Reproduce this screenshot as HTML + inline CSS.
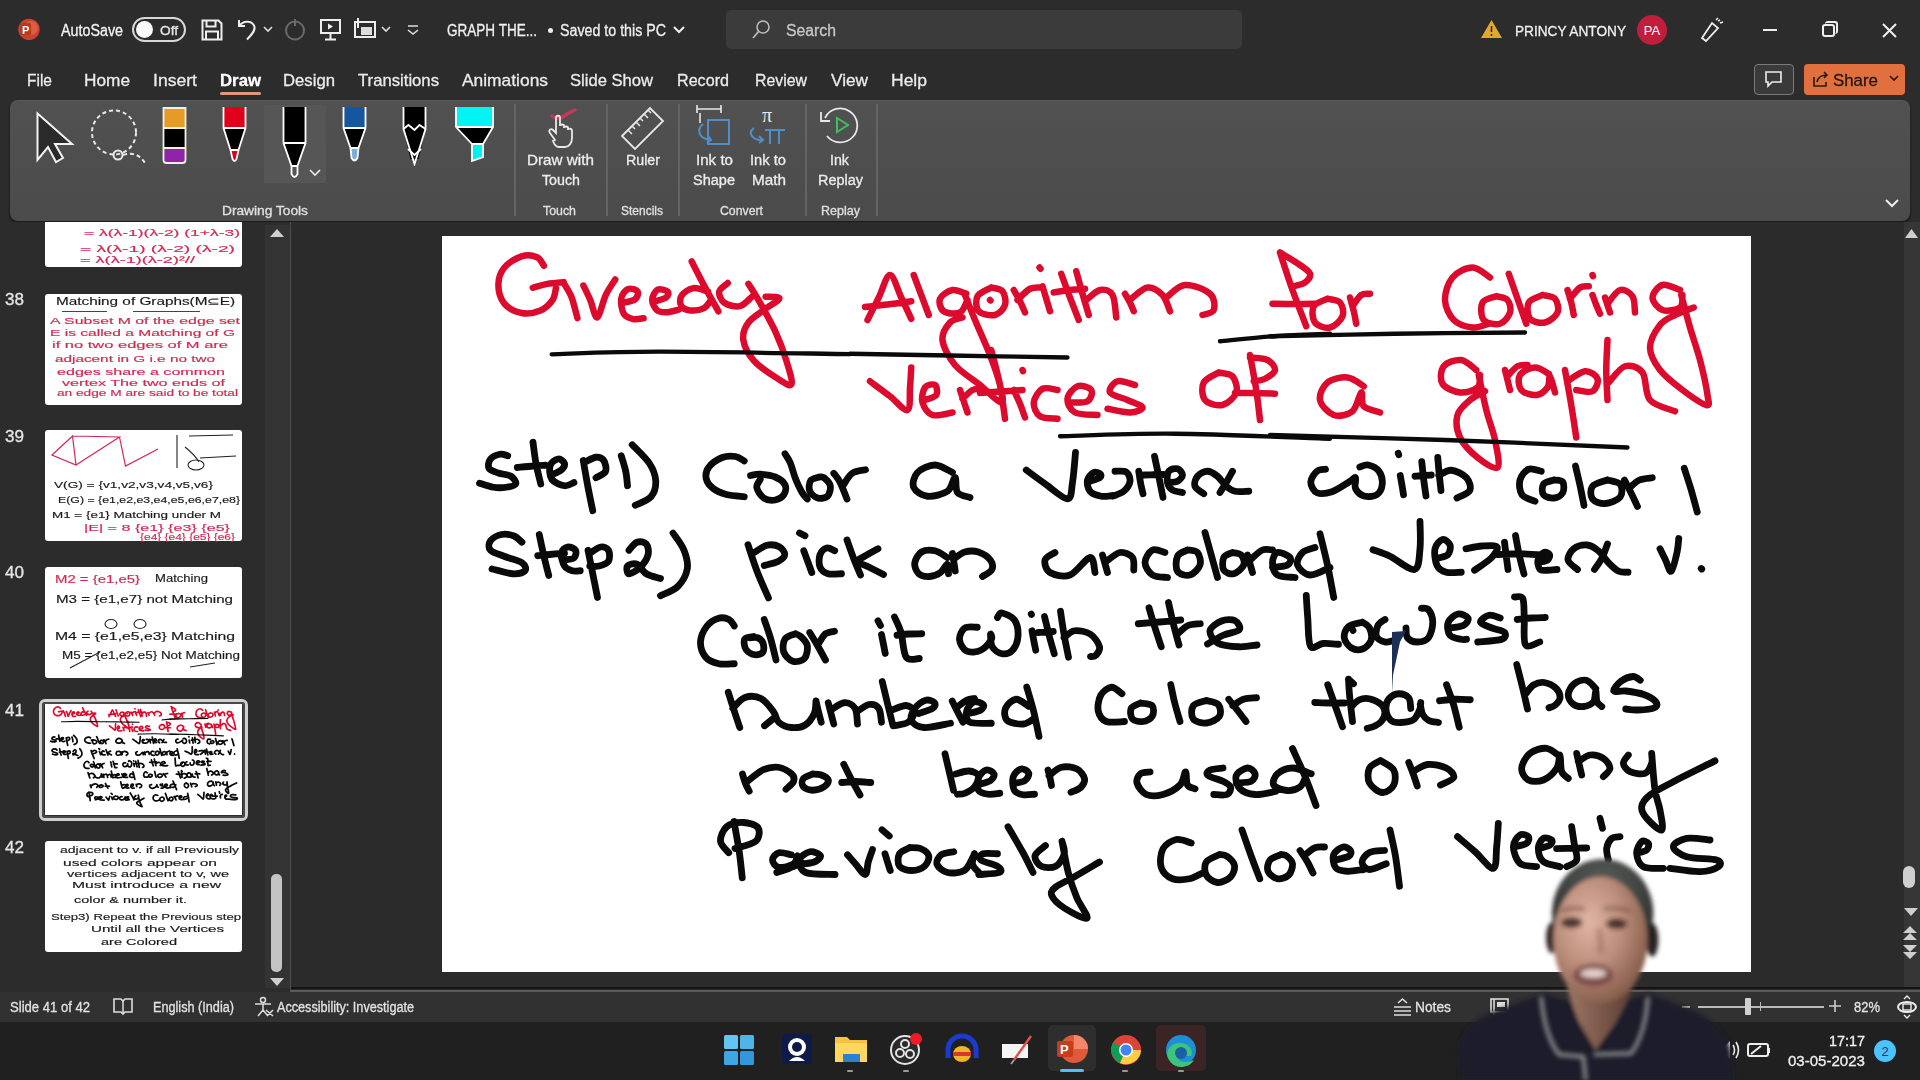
<!DOCTYPE html>
<html><head><meta charset="utf-8"><style>
*{margin:0;padding:0;box-sizing:border-box}
html,body{width:1920px;height:1080px;overflow:hidden;background:#2c2c2c;font-family:"Liberation Sans",sans-serif;color:#f0f0f0}
.a{position:absolute;display:block}
.t{position:absolute;white-space:nowrap;line-height:1;transform-origin:0 0;-webkit-text-stroke:0.3px currentColor}
</style></head><body>

<div class="a" style="left:0px;top:0px;width:1920px;height:100px;background:#2c2c2c;"></div>
<div class="a" style="left:10px;top:100px;width:1900px;height:121px;background:linear-gradient(#515151,#4b4b4b);border-radius:8px;box-shadow:0 1px 0 #1a1a1a,0 2px 3px rgba(0,0,0,.5);border-top:1px solid #5a5a5a"></div>
<div class="a" style="left:0px;top:222px;width:290px;height:768px;background:#2c2c2c;"></div>
<div class="a" style="left:290px;top:222px;width:1px;height:770px;background:#4e4e4e;"></div>
<div class="a" style="left:291px;top:222px;width:1613px;height:768px;background:#2b2b2b;"></div>
<div class="a" style="left:1904px;top:222px;width:16px;height:768px;background:#363636;"></div>
<div class="a" style="left:291px;top:987px;width:1629px;height:2px;background:#141414;"></div>
<div class="a" style="left:290px;top:990px;width:1630px;height:1.5px;background:#5a5a5a;"></div>
<div class="a" style="left:0px;top:992px;width:1920px;height:30px;background:#313131;"></div>
<div class="a" style="left:0px;top:1022px;width:1920px;height:58px;background:#202020;"></div>
<svg class="a" style="left:17px;top:17px;" width="26" height="26" viewBox="0 0 26 26"><circle cx="12" cy="12.4" r="10.7" fill="#c9432a"></circle><circle cx="14" cy="11" r="7" fill="#e0694f" opacity=".7"></circle><rect x="3" y="6" width="11" height="12" rx="1.5" fill="#b7381e"></rect><text x="5" y="16.5" font-family="Liberation Sans" font-weight="bold" font-size="11" fill="#fff">P</text></svg>
<span class="t" style="left: 61px; top: 22.5px; font-size: 16px; --w: 62px; color: rgb(242, 242, 242); transform: scaleX(0.8935);">AutoSave</span>
<div class="a" style="left:132px;top:17px;width:54px;height:25px;border:2px solid #d8d8d8;border-radius:13px;background:#2c2c2c"></div>
<div class="a" style="left:136px;top:21px;width:17px;height:17px;border-radius:50%;background:#fafafa"></div>
<span class="t" style="left: 160px; top: 24px; font-size: 13px; --w: 18px; color: rgb(230, 230, 230); transform: scaleX(1.0521);">Off</span>
<svg class="a" style="left:200px;top:18px;" width="24" height="24" viewBox="0 0 24 24"><path d="M2.5 2.5h16l3 3v16h-19z" fill="none" stroke="#eee" stroke-width="2"></path><path d="M6.5 2.5v6h9v-6M6 21.5v-8h12v8" fill="none" stroke="#eee" stroke-width="2"></path></svg>
<svg class="a" style="left:235px;top:16px;" width="24" height="26" viewBox="0 0 24 26"><path d="M4 4v6h6" fill="none" stroke="#eee" stroke-width="2"></path><path d="M4.5 9.5C8 5 16 4 19 9.5c2 4-1 8-7 14" fill="none" stroke="#eee" stroke-width="2"></path></svg>
<svg class="a" style="left:263px;top:25px;" width="10" height="8" viewBox="0 0 10 8"><path d="M1 2l4 4 4-4" fill="none" stroke="#ddd" stroke-width="1.6"></path></svg>
<svg class="a" style="left:283px;top:18px;" width="24" height="24" viewBox="0 0 24 24"><circle cx="12" cy="12.5" r="9" fill="none" stroke="#6a6a6a" stroke-width="2"></circle><path d="M12 1v7" stroke="#6a6a6a" stroke-width="2"></path></svg>
<svg class="a" style="left:319px;top:18px;" width="24" height="24" viewBox="0 0 24 24"><rect x="2" y="2" width="19" height="13" fill="none" stroke="#eee" stroke-width="2"></rect><path d="M9 5.5v6l5-3z" fill="#eee"></path><path d="M11.5 15v6M6 21.5h11" stroke="#eee" stroke-width="2"></path></svg>
<svg class="a" style="left:352px;top:18px;" width="26" height="24" viewBox="0 0 26 24"><rect x="3" y="4" width="20" height="15" fill="none" stroke="#eee" stroke-width="2"></rect><rect x="9" y="9" width="11" height="8" fill="#ddd"></rect><path d="M6 0v10" stroke="#eee" stroke-width="2"></path></svg>
<svg class="a" style="left:381px;top:25px;" width="10" height="8" viewBox="0 0 10 8"><path d="M1 2l4 4 4-4" fill="none" stroke="#ddd" stroke-width="1.6"></path></svg>
<svg class="a" style="left:406px;top:24px;" width="14" height="12" viewBox="0 0 14 12"><path d="M2 2h10M2 6l5 4 5-4" fill="none" stroke="#ddd" stroke-width="1.6"></path></svg>
<span class="t" style="left: 447px; top: 22.5px; font-size: 16px; --w: 90px; color: rgb(240, 240, 240); transform: scaleX(0.8459);">GRAPH THE...</span>
<div class="a" style="left:548px;top:28px;width:5px;height:5px;border-radius:50%;background:#eee"></div>
<span class="t" style="left: 560px; top: 22.5px; font-size: 16px; --w: 106px; color: rgb(240, 240, 240); transform: scaleX(0.8895);">Saved to this PC</span>
<svg class="a" style="left:672px;top:24px;" width="14" height="12" viewBox="0 0 14 12"><path d="M2 3l5 5 5-5" fill="none" stroke="#eee" stroke-width="2"></path></svg>
<div class="a" style="left:726px;top:10px;width:516px;height:39px;background:#3b3b3b;border-radius:5px"></div>
<svg class="a" style="left:750px;top:18px;" width="22" height="24" viewBox="0 0 22 24"><circle cx="13" cy="9" r="6" fill="none" stroke="#bbb" stroke-width="1.6"></circle><path d="M9 13l-6 7" stroke="#bbb" stroke-width="1.8"></path></svg>
<span class="t" style="left: 786px; top: 22.5px; font-size: 16px; --w: 50px; color: rgb(200, 200, 200); transform: scaleX(0.9861);">Search</span>
<svg class="a" style="left:1480px;top:18px;" width="24" height="22" viewBox="0 0 24 22"><path d="M11.5 2L22 20H1z" fill="#e2a72f"></path><path d="M11.5 8v6" stroke="#2c2c2c" stroke-width="1.6"></path><circle cx="11.5" cy="17" r="1" fill="#2c2c2c"></circle></svg>
<span class="t" style="left: 1515px; top: 23.3px; font-size: 15px; --w: 111px; color: rgb(240, 240, 240); transform: scaleX(0.91);">PRINCY ANTONY</span>
<svg class="a" style="left:1636px;top:14px;" width="32" height="32" viewBox="0 0 32 32"><circle cx="16" cy="16" r="15" fill="#c01e3c"></circle><text x="16" y="21" text-anchor="middle" font-family="Liberation Sans" font-size="13" fill="#fff">PA</text></svg>
<svg class="a" style="left:1699px;top:17px;" width="26" height="26" viewBox="0 0 26 26"><path d="M3 21l4 3 12-13-6-5z" fill="none" stroke="#eee" stroke-width="1.8"></path><path d="M17 3l2-2M21 6l3-1M19 4l2-1" stroke="#eee" stroke-width="1.5"></path></svg>
<div class="a" style="left:1763px;top:29px;width:14px;height:2px;background:#eeeeee;"></div>
<div class="a" style="left:1822px;top:24px;width:13px;height:13px;border:2px solid #eee;border-radius:3px"></div>
<div class="a" style="left:1825px;top:21px;width:13px;height:13px;border-top:2px solid #eee;border-right:2px solid #eee;border-radius:3px"></div>
<svg class="a" style="left:1881px;top:22px;" width="17" height="17" viewBox="0 0 17 17"><path d="M2 2l13 13M15 2L2 15" stroke="#eee" stroke-width="2"></path></svg>
<span class="t" style="left: 27px; top: 71.6px; font-size: 17px; --w: 25px; color: rgb(235, 235, 235); transform: scaleX(0.9122);">File</span>
<span class="t" style="left: 84px; top: 71.6px; font-size: 17px; --w: 46px; color: rgb(235, 235, 235); transform: scaleX(1.0141);">Home</span>
<span class="t" style="left: 153px; top: 71.6px; font-size: 17px; --w: 44px; color: rgb(235, 235, 235); transform: scaleX(1.0345);">Insert</span>
<span class="t" style="left: 283px; top: 71.6px; font-size: 17px; --w: 52px; color: rgb(235, 235, 235); transform: scaleX(0.9826);">Design</span>
<span class="t" style="left: 358px; top: 71.6px; font-size: 17px; --w: 81px; color: rgb(235, 235, 235); transform: scaleX(0.9816);">Transitions</span>
<span class="t" style="left: 462px; top: 71.6px; font-size: 17px; --w: 86px; color: rgb(235, 235, 235); transform: scaleX(1.0225);">Animations</span>
<span class="t" style="left: 570px; top: 71.6px; font-size: 17px; --w: 83px; color: rgb(235, 235, 235); transform: scaleX(0.9758);">Slide Show</span>
<span class="t" style="left: 677px; top: 71.6px; font-size: 17px; --w: 52px; color: rgb(235, 235, 235); transform: scaleX(0.9487);">Record</span>
<span class="t" style="left: 755px; top: 71.6px; font-size: 17px; --w: 52px; color: rgb(235, 235, 235); transform: scaleX(0.9327);">Review</span>
<span class="t" style="left: 831px; top: 71.6px; font-size: 17px; --w: 37px; color: rgb(235, 235, 235); transform: scaleX(1.0124);">View</span>
<span class="t" style="left: 891px; top: 71.6px; font-size: 17px; --w: 36px; color: rgb(235, 235, 235); transform: scaleX(1.0295);">Help</span>
<span class="t" style="left: 220px; top: 71.6px; font-size: 17px; --w: 41px; color: rgb(255, 255, 255); font-weight: bold; transform: scaleX(0.9861);">Draw</span>
<div class="a" style="left:220px;top:92px;width:41px;height:3px;background:#e3967b;border-radius:2px"></div>
<div class="a" style="left:1754px;top:64px;width:40px;height:31px;border:1.5px solid #7a7a7a;border-radius:4px;background:#3a3a3a"></div>
<svg class="a" style="left:1764px;top:70px;" width="20" height="18" viewBox="0 0 20 18"><path d="M2 2h15v10H8l-4 4v-4H2z" fill="none" stroke="#eee" stroke-width="1.6"></path></svg>
<div class="a" style="left:1804px;top:64px;width:101px;height:31px;background:#e2703f;border-radius:4px"></div>
<svg class="a" style="left:1811px;top:70px;" width="20" height="18" viewBox="0 0 20 18"><path d="M3 7v9h12v-4" fill="none" stroke="#2a1a10" stroke-width="1.6"></path><path d="M6 12c1-5 5-7 10-7M13 2l3 3-3 3" fill="none" stroke="#2a1a10" stroke-width="1.6"></path></svg>
<span class="t" style="left: 1833px; top: 71.6px; font-size: 17px; --w: 45px; color: rgb(34, 22, 14); transform: scaleX(0.9917);">Share</span>
<svg class="a" style="left:1888px;top:73px;" width="12" height="10" viewBox="0 0 12 10"><path d="M2 3l4 4 4-4" fill="none" stroke="#22160e" stroke-width="1.6"></path></svg>
<svg class="a" style="left:30px;top:108px;" width="50" height="60" viewBox="0 0 50 60"><path d="M7.5 5.5V52l10.5-13 8 15 7-4-8-14h17z" fill="#2a2a2a" stroke="#f2f2f2" stroke-width="2"></path></svg>
<svg class="a" style="left:86px;top:104px;" width="66" height="64" viewBox="0 0 66 64"><circle cx="28" cy="28.5" r="22" fill="none" stroke="#e8e8e8" stroke-width="2" stroke-dasharray="4 3"></circle><circle cx="32" cy="51" r="4.5" fill="none" stroke="#e8e8e8" stroke-width="2"></circle><path d="M37 51c10-3 17 0 22 8" fill="none" stroke="#e8e8e8" stroke-width="2" stroke-dasharray="4 3"></path></svg>
<svg class="a" style="left:160px;top:105px;" width="30" height="62" viewBox="0 0 30 62"><rect x="3.5" y="3" width="22" height="20" fill="#e69b24"></rect><rect x="3.5" y="23" width="22" height="20" fill="#000"></rect><path d="M3.5 43h22v12q0 3-3 3h-16q-3 0-3-3z" fill="#8e24aa"></path><path d="M3.5 3h22v52q0 3-3 3h-16q-3 0-3-3z" fill="none" stroke="#f4f0e0" stroke-width="1.8"></path><path d="M3.5 23h22M3.5 43h22" stroke="#f4f0e0" stroke-width="1.8"></path></svg>
<svg class="a" style="left:220px;top:104px;" width="30" height="62" viewBox="0 0 30 62"><rect x="3.5" y="3" width="22" height="21" fill="#e0001b"></rect><path d="M3.5 24h22l-7 22h-8z" fill="#000"></path><path d="M10.5 46h8l-2 9q-2 4-4 0z" fill="#e0001b"></path><path d="M3.5 3v21l7 22 2 9q2 4 4 0l2-9 7-22V3" fill="none" stroke="#fff" stroke-width="1.8"></path><path d="M3.5 24h22M10.5 46h8" stroke="#fff" stroke-width="1.8"></path></svg>
<div class="a" style="left:264px;top:105px;width:62px;height:78px;background:#565656;border-radius:2px"></div>
<svg class="a" style="left:280px;top:104px;" width="30" height="78" viewBox="0 0 30 78"><rect x="3.5" y="3" width="22" height="36" fill="#000"></rect><path d="M3.5 39h22l-8 23h-6z" fill="#000"></path><path d="M3.5 3v36l8 23v8q3 6 6 0v-8l8-23V3" fill="none" stroke="#fff" stroke-width="1.8"></path><path d="M3.5 39h22M11.5 62h6" stroke="#fff" stroke-width="1.8"></path></svg>
<svg class="a" style="left:308px;top:168px;" width="14" height="10" viewBox="0 0 14 10"><path d="M2 2l5 5 5-5" fill="none" stroke="#eee" stroke-width="1.6"></path></svg>
<svg class="a" style="left:340px;top:104px;" width="30" height="62" viewBox="0 0 30 62"><rect x="3.5" y="3" width="22" height="21" fill="#1457a0"></rect><path d="M3.5 24h22l-7 20h-8z" fill="#000"></path><path d="M10.5 44h8l-1 10q-3 5-6 0z" fill="#7aaee0"></path><path d="M3.5 3v21l7 20 1 10q3 5 6 0l1-10 7-20V3" fill="none" stroke="#fff" stroke-width="1.8"></path><path d="M3.5 24h22M10.5 44h8" stroke="#fff" stroke-width="1.8"></path></svg>
<svg class="a" style="left:400px;top:104px;" width="30" height="62" viewBox="0 0 30 62"><path d="M3.5 3h22v22l-7 30h-8l-7-30z" fill="#000"></path><path d="M3.5 3v22l11 35 11-35V3" fill="none" stroke="#fff" stroke-width="1.8"></path><path d="M3.5 25l5-4 6 5 5-5 6 4M8 45l6.5 6 6.5-6" fill="none" stroke="#fff" stroke-width="1.8"></path></svg>
<svg class="a" style="left:452px;top:104px;" width="44" height="62" viewBox="0 0 44 62"><rect x="4" y="3" width="37" height="20" fill="#00f4f4"></rect><path d="M4 23h37l-10 17v13l-11 4V40z" fill="#000"></path><path d="M20 40h11v13l-11 4z" fill="#00f0f0"></path><path d="M4 3v20l16 17v17l11-4V40l10-17V3" fill="none" stroke="#fff" stroke-width="1.8"></path><path d="M4 23h37M20 40h11" stroke="#fff" stroke-width="1.8"></path></svg>
<span class="t" style="left: 222px; top: 204px; font-size: 13px; --w: 86px; color: rgb(224, 224, 224); transform: scaleX(1.0562);">Drawing Tools</span>
<div class="a" style="left:514px;top:104px;width:1.5px;height:112px;background:#646464;"></div>
<div class="a" style="left:606px;top:104px;width:1.5px;height:112px;background:#646464;"></div>
<div class="a" style="left:678px;top:104px;width:1.5px;height:112px;background:#646464;"></div>
<div class="a" style="left:805px;top:104px;width:1.5px;height:112px;background:#646464;"></div>
<div class="a" style="left:876px;top:104px;width:1.5px;height:112px;background:#646464;"></div>
<svg class="a" style="left:541px;top:104px;" width="40" height="46" viewBox="0 0 40 46"><path d="M11 12c4 3 8 3 12 0s7-4 11-6" fill="none" stroke="#c23a55" stroke-width="3.5" stroke-linecap="round"></path><path d="M14 36l-5-7c-2-3 1-5 3-3l3 3V14c0-3 4-3 4 0v8c0-2 4-2 4 0v2c0-2 4-2 4 0v2c0-2 4-2 4 1v7c0 5-3 9-7 9h-6c-3 0-5-3-6-6z" fill="none" stroke="#e8e8e8" stroke-width="1.8"></path></svg>
<span class="t" style="left: 527px; top: 153.1px; font-size: 14px; --w: 67px; color: rgb(236, 236, 236); transform: scaleX(1.09);">Draw with</span>
<span class="t" style="left: 542px; top: 173.1px; font-size: 14px; --w: 38px; color: rgb(236, 236, 236); transform: scaleX(1.0171);">Touch</span>
<span class="t" style="left: 543px; top: 204px; font-size: 13px; --w: 33px; color: rgb(224, 224, 224); transform: scaleX(0.9509);">Touch</span>
<svg class="a" style="left:620px;top:104px;" width="46" height="46" viewBox="0 0 46 46"><path d="M2 32L30 4l13 13-28 28z" fill="none" stroke="#e8e8e8" stroke-width="1.8"></path><path d="M8 26l4 4M12 22l3 3M16 18l4 4M20 14l3 3M24 10l4 4M28 6l3 3" stroke="#e8e8e8" stroke-width="1.5"></path></svg>
<span class="t" style="left: 626px; top: 153.1px; font-size: 14px; --w: 34px; color: rgb(236, 236, 236); transform: scaleX(1.0159);">Ruler</span>
<span class="t" style="left: 621px; top: 204px; font-size: 13px; --w: 42px; color: rgb(224, 224, 224); transform: scaleX(0.9224);">Stencils</span>
<svg class="a" style="left:694px;top:104px;" width="40" height="46" viewBox="0 0 40 46"><path d="M3 5h24M3 1v8M27 1v8" stroke="#e8e8e8" stroke-width="1.6" fill="none"></path><path d="M6 9v10" stroke="#e8e8e8" stroke-width="1.6"></path><rect x="14" y="16" width="21" height="24" fill="none" stroke="#4f8fc7" stroke-width="2"></rect><path d="M9 20c-7 6-4 15 8 16M14 32l3 4-4 3" fill="none" stroke="#4f8fc7" stroke-width="2"></path></svg>
<span class="t" style="left: 696px; top: 153.1px; font-size: 14px; --w: 37px; color: rgb(236, 236, 236); transform: scaleX(1.0803);">Ink to</span>
<span class="t" style="left: 693px; top: 173.1px; font-size: 14px; --w: 42px; color: rgb(236, 236, 236); transform: scaleX(1.0374);">Shape</span>
<svg class="a" style="left:748px;top:104px;" width="40" height="46" viewBox="0 0 40 46"><text x="14" y="18" font-family="Liberation Serif" font-size="20" fill="#e8e8e8">π</text><path d="M6 24c-6 4-3 12 8 12M11 32l4 4-4 3" fill="none" stroke="#4f8fc7" stroke-width="2"></path><path d="M17 26h20M22 26v14M31 26v14" stroke="#4f8fc7" stroke-width="2"></path></svg>
<span class="t" style="left: 750px; top: 153.1px; font-size: 14px; --w: 36px; color: rgb(236, 236, 236); transform: scaleX(1.0511);">Ink to</span>
<span class="t" style="left: 752px; top: 173.1px; font-size: 14px; --w: 34px; color: rgb(236, 236, 236); transform: scaleX(1.0924);">Math</span>
<span class="t" style="left: 720px; top: 204px; font-size: 13px; --w: 43px; color: rgb(224, 224, 224); transform: scaleX(0.9444);">Convert</span>
<svg class="a" style="left:818px;top:104px;" width="46" height="46" viewBox="0 0 46 46"><path d="M7 14A17 17 0 1 1 9 32" fill="none" stroke="#e8e8e8" stroke-width="1.8"></path><path d="M3 8v9h9" fill="none" stroke="#e8e8e8" stroke-width="1.8"></path><path d="M19 14v14l11-7z" fill="none" stroke="#3fbf5f" stroke-width="2"></path></svg>
<span class="t" style="left: 830px; top: 153.1px; font-size: 14px; --w: 19px; color: rgb(236, 236, 236); transform: scaleX(1.0167);">Ink</span>
<span class="t" style="left: 818px; top: 173.1px; font-size: 14px; --w: 45px; color: rgb(236, 236, 236); transform: scaleX(1.0323);">Replay</span>
<span class="t" style="left: 821px; top: 204px; font-size: 13px; --w: 39px; color: rgb(224, 224, 224); transform: scaleX(0.9637);">Replay</span>
<svg class="a" style="left:1884px;top:197px;" width="16" height="12" viewBox="0 0 16 12"><path d="M2 3l6 6 6-6" fill="none" stroke="#eee" stroke-width="2"></path></svg>
<div class="a" style="left:265px;top:225px;width:25px;height:763px;background:#333333;"></div>
<svg class="a" style="left:268px;top:227px;" width="18" height="12" viewBox="0 0 18 12"><path d="M2 10l7-8 7 8z" fill="#cfcfcf"></path></svg>
<div class="a" style="left:271px;top:874px;width:11px;height:98px;background:#c4c4c4;border-radius:5px"></div>
<svg class="a" style="left:268px;top:976px;" width="18" height="12" viewBox="0 0 18 12"><path d="M2 2l7 8 7-8z" fill="#cfcfcf"></path></svg>
<svg class="a" style="left:1903px;top:226px;" width="17" height="14" viewBox="0 0 17 14"><path d="M2 12l6.5-9 6.5 9z" fill="#cfcfcf"></path></svg>
<div class="a" style="left:1903px;top:866px;width:12px;height:22px;background:#cfcfcf;border-radius:6px"></div>
<svg class="a" style="left:1902px;top:906px;" width="17" height="12" viewBox="0 0 17 12"><path d="M2 2l7 8 7-8z" fill="#cfcfcf"></path></svg>
<svg class="a" style="left:1901px;top:925px;" width="18" height="36" viewBox="0 0 18 36"><path d="M2 8l7-7 7 7zM2 15l7-7 7 7z" fill="#cfcfcf"></path><path d="M2 20l7 7 7-7zM2 27l7 7 7-7z" fill="#cfcfcf"></path></svg>
<span class="t" style="left: 10px; top: 1000.1px; font-size: 14px; --w: 80px; color: rgb(226, 226, 226); transform: scaleX(0.9343);">Slide 41 of 42</span>
<svg class="a" style="left:112px;top:997px;" width="22" height="20" viewBox="0 0 22 20"><path d="M2 2h7l2 2 2-2h7v13h-7l-2 2-2-2H2z" fill="none" stroke="#ddd" stroke-width="1.6"></path><path d="M11 4v13" stroke="#ddd" stroke-width="1.5"></path></svg>
<span class="t" style="left: 153px; top: 1000.1px; font-size: 14px; --w: 81px; color: rgb(226, 226, 226); transform: scaleX(0.905);">English (India)</span>
<svg class="a" style="left:253px;top:996px;" width="22" height="22" viewBox="0 0 22 22"><circle cx="10" cy="4" r="2.5" fill="none" stroke="#ddd" stroke-width="1.5"></circle><path d="M2 8h16M10 8v6l-5 6M10 14l5 6M13 14l7 6M20 14l-6 6" fill="none" stroke="#ddd" stroke-width="1.5"></path></svg>
<span class="t" style="left: 277px; top: 1000.1px; font-size: 14px; --w: 137px; color: rgb(226, 226, 226); transform: scaleX(0.9029);">Accessibility: Investigate</span>
<svg class="a" style="left:1392px;top:996px;" width="22" height="22" viewBox="0 0 22 22"><path d="M2 11h17M2 15h17M2 19h17M6 7l4.5-4 4.5 4" fill="none" stroke="#ddd" stroke-width="1.6"></path></svg>
<span class="t" style="left: 1415px; top: 1000.1px; font-size: 14px; --w: 36px; color: rgb(226, 226, 226); transform: scaleX(0.9842);">Notes</span>
<svg class="a" style="left:1489px;top:997px;" width="22" height="20" viewBox="0 0 22 20"><rect x="2" y="2" width="17" height="13" fill="none" stroke="#ddd" stroke-width="1.6"></rect><rect x="8" y="5" width="8" height="5" fill="#ddd"></rect><path d="M5 2v16" stroke="#ddd" stroke-width="1.6"></path></svg>
<div class="a" style="left:1682px;top:1006px;width:8px;height:1.5px;background:#bbbbbb;"></div>
<div class="a" style="left:1698px;top:1006px;width:126px;height:1.5px;background:#bbbbbb;"></div>
<div class="a" style="left:1745px;top:998px;width:6px;height:17px;background:#d0d0d0;border-radius:1px"></div>
<div class="a" style="left:1760px;top:1002px;width:1px;height:9px;background:#bbbbbb;"></div>
<svg class="a" style="left:1827px;top:998px;" width="16" height="16" viewBox="0 0 16 16"><path d="M8 2v12M2 8h12" stroke="#ccc" stroke-width="1.6"></path></svg>
<span class="t" style="left: 1854px; top: 1000.1px; font-size: 14px; --w: 26px; color: rgb(226, 226, 226); transform: scaleX(0.9275);">82%</span>
<svg class="a" style="left:1895px;top:995px;" width="24" height="24" viewBox="0 0 24 24"><ellipse cx="12" cy="12" rx="9" ry="5" fill="none" stroke="#eee" stroke-width="2"></ellipse><rect x="8" y="9" width="8" height="6" fill="none" stroke="#eee" stroke-width="1.4"></rect><path d="M9 4l3-3 3 3M9 20l3 3 3-3" fill="none" stroke="#eee" stroke-width="1.4"></path></svg>
<svg class="a" style="left:723px;top:1034px;" width="32" height="32" viewBox="0 0 32 32"><rect x="1" y="1" width="14" height="14" rx="1.5" fill="#63c6f2"></rect><rect x="17" y="1" width="14" height="14" rx="1.5" fill="#4fb4ea"></rect><rect x="1" y="17" width="14" height="14" rx="1.5" fill="#3fa6e3"></rect><rect x="17" y="17" width="14" height="14" rx="1.5" fill="#3198dc"></rect></svg>
<svg class="a" style="left:781px;top:1033px;" width="32" height="32" viewBox="0 0 32 32"><rect x="1" y="1" width="30" height="30" rx="4" fill="#0e1a4a"></rect><circle cx="16" cy="14" r="9" fill="#fff"></circle><circle cx="16" cy="14" r="5" fill="#0e1a4a"></circle><path d="M8 28q8-8 16 0z" fill="#fff"></path></svg>
<svg class="a" style="left:834px;top:1034px;" width="34" height="30" viewBox="0 0 34 30"><path d="M1 3h12l3 3h17v22H1z" fill="#f5c341"></path><rect x="1" y="9" width="32" height="19" fill="#ffd75e"></rect><rect x="9" y="20" width="17" height="8" fill="#2f7fcf"></rect></svg>
<svg class="a" style="left:889px;top:1031px;" width="36" height="36" viewBox="0 0 36 36"><circle cx="16" cy="19" r="14" fill="#2a2a2a" stroke="#e4e4e4" stroke-width="2"></circle><circle cx="16" cy="13" r="4" fill="none" stroke="#e4e4e4" stroke-width="2"></circle><circle cx="11" cy="22" r="4" fill="none" stroke="#e4e4e4" stroke-width="2"></circle><circle cx="21" cy="23" r="4" fill="none" stroke="#e4e4e4" stroke-width="2"></circle><circle cx="27" cy="8" r="6" fill="#ee1b24"></circle></svg>
<svg class="a" style="left:944px;top:1032px;" width="36" height="34" viewBox="0 0 36 34"><path d="M4 26V18a14 14 0 0 1 28 0v8" fill="none" stroke="#1a3ad0" stroke-width="5"></path><ellipse cx="18" cy="22" rx="9" ry="8" fill="#f0b52a"></ellipse><rect x="9" y="20" width="18" height="4" fill="#d23a2a"></rect></svg>
<svg class="a" style="left:1000px;top:1034px;" width="34" height="32" viewBox="0 0 34 32"><rect x="2" y="10" width="26" height="14" fill="#f5f5f5"></rect><path d="M31 2L14 26" stroke="#e0504a" stroke-width="2.5"></path><path d="M14 26l-3 4" stroke="#999" stroke-width="2"></path></svg>
<div class="a" style="left:1048px;top:1025px;width:48px;height:46px;background:#2e2e2e;border-radius:5px"></div>
<svg class="a" style="left:1054px;top:1033px;" width="36" height="34" viewBox="0 0 36 34"><circle cx="20" cy="16" r="14" fill="#e0593c"></circle><path d="M20 2a14 14 0 0 1 14 14H20z" fill="#f4876a"></path><rect x="3" y="8" width="16" height="16" rx="2" fill="#c43e1c"></rect><text x="6" y="21" font-family="Liberation Sans" font-weight="bold" font-size="13" fill="#fff">P</text></svg>
<div class="a" style="left:1060px;top:1069px;width:24px;height:3px;background:#4cc2ff;border-radius:2px"></div>
<svg class="a" style="left:1109px;top:1033px;" width="34" height="34" viewBox="0 0 34 34"><circle cx="17" cy="17" r="15" fill="#db4437"></circle><path d="M17 17L4 9.5A15 15 0 0 0 11 30z" fill="#0f9d58"></path><path d="M17 17l-6 13A15 15 0 0 0 32 17z" fill="#ffcd40"></path><path d="M17 17L32 17A15 15 0 0 0 30 9.5z" fill="#db4437"></path><circle cx="17" cy="17" r="7" fill="#fff"></circle><circle cx="17" cy="17" r="5.5" fill="#4285f4"></circle></svg>
<div class="a" style="left:1156px;top:1025px;width:50px;height:46px;background:#3a2424;border-radius:5px"></div>
<svg class="a" style="left:1164px;top:1033px;" width="34" height="34" viewBox="0 0 34 34"><circle cx="17" cy="17" r="15" fill="#1e8fd6"></circle><path d="M3 20c2-8 10-12 18-9 6 2 8 8 6 12H13c0 5 8 8 17 4-3 5-8 7-13 7C9 34 3 27 3 20z" fill="#3cc47a"></path><circle cx="17" cy="20" r="6" fill="#1b5fa8"></circle></svg>
<div class="a" style="left:847px;top:1070px;width:6px;height:2px;background:#9a9a9a;border-radius:1px"></div>
<div class="a" style="left:903px;top:1070px;width:6px;height:2px;background:#9a9a9a;border-radius:1px"></div>
<div class="a" style="left:1122px;top:1070px;width:6px;height:2px;background:#9a9a9a;border-radius:1px"></div>
<div class="a" style="left:1178px;top:1070px;width:6px;height:2px;background:#9a9a9a;border-radius:1px"></div>
<svg class="a" style="left:1718px;top:1038px;" width="22" height="24" viewBox="0 0 22 24"><path d="M3 8v8h4l5 5V3L7 8z" fill="#eee"></path><path d="M15 7q3 5 0 10M18 4q5 8 0 16" fill="none" stroke="#eee" stroke-width="1.6"></path></svg>
<svg class="a" style="left:1746px;top:1038px;" width="26" height="22" viewBox="0 0 26 22"><rect x="2" y="6" width="20" height="12" rx="2" fill="none" stroke="#eee" stroke-width="2"></rect><rect x="22" y="10" width="2" height="5" fill="#eee"></rect><path d="M5 16l10-8" stroke="#eee" stroke-width="2"></path></svg>
<span class="t" style="left: 1829px; top: 1034.1px; font-size: 14px; --w: 36px; color: rgb(240, 240, 240); text-align: right; transform: scaleX(1.0272);">17:17</span>
<span class="t" style="left: 1788px; top: 1054.1px; font-size: 14px; --w: 77px; color: rgb(240, 240, 240); transform: scaleX(1.075);">03-05-2023</span>
<svg class="a" style="left:1872px;top:1038px;" width="26" height="26" viewBox="0 0 26 26"><circle cx="13" cy="13" r="11" fill="#4cc2ff"></circle><text x="13" y="18" text-anchor="middle" font-family="Liberation Sans" font-size="13" fill="#1a3a6a">2</text></svg>
<div class="a" style="left:45px;top:222px;width:197px;height:45px;background:#ffffff;border-radius:0 0 3px 3px"></div>
<div class="a" style="left:45px;top:294px;width:197px;height:111px;background:#ffffff;border-radius:3px"></div>
<div class="a" style="left:45px;top:430px;width:197px;height:111px;background:#ffffff;border-radius:3px"></div>
<div class="a" style="left:45px;top:567px;width:197px;height:111px;background:#ffffff;border-radius:3px"></div>
<div class="a" style="left:45px;top:841px;width:197px;height:111px;background:#ffffff;border-radius:3px"></div>
<div class="a" style="left:39px;top:699px;width:209px;height:122px;border:3px solid #cfcfcf;border-radius:6px"></div>
<div class="a" style="left:42px;top:702px;width:203px;height:116px;border:2px solid #4a4a4a;border-radius:4px"></div>
<div class="a" style="left:45px;top:704px;width:197px;height:111px;background:#ffffff;"></div>
<span class="t" style="left: 5px; top: 291.5px; font-size: 16px; --w: 19px; color: rgb(230, 230, 230); transform: scaleX(1.0676);">38</span>
<span class="t" style="left: 5px; top: 428.5px; font-size: 16px; --w: 19px; color: rgb(230, 230, 230); transform: scaleX(1.0676);">39</span>
<span class="t" style="left: 5px; top: 564.5px; font-size: 16px; --w: 19px; color: rgb(230, 230, 230); transform: scaleX(1.0676);">40</span>
<span class="t" style="left: 5px; top: 702.5px; font-size: 16px; --w: 19px; color: rgb(230, 230, 230); transform: scaleX(1.0676);">41</span>
<span class="t" style="left: 5px; top: 839.5px; font-size: 16px; --w: 19px; color: rgb(230, 230, 230); transform: scaleX(1.0676);">42</span>
<span class="t" style="left: 84px; top: 228.6px; font-size: 9px; --w: 156px; color: rgb(212, 40, 80); -webkit-text-stroke: 0.15px currentcolor; transform: scaleX(1.9375);">= λ(λ-1)(λ-2) (1+λ-3)</span>
<span class="t" style="left: 80px; top: 244.6px; font-size: 9px; --w: 155px; color: rgb(212, 40, 80); -webkit-text-stroke: 0.15px currentcolor; transform: scaleX(2.1306);">= λ(λ-1) (λ-2) (λ-2)</span>
<span class="t" style="left: 80px; top: 255.6px; font-size: 9px; --w: 115px; color: rgb(212, 40, 80); -webkit-text-stroke: 0.15px currentcolor; transform: scaleX(2.0087);">= λ(λ-1)(λ-2)²//</span>
<span class="t" style="left: 56px; top: 297.1px; font-size: 10px; --w: 179px; color: rgb(26, 26, 26); -webkit-text-stroke: 0.15px currentcolor; transform: scaleX(1.5307);">Matching of Graphs(M⊆E)</span>
<div class="a" style="left:62px;top:311px;width:45px;height:1px;background:#444;"></div>
<div class="a" style="left:133px;top:311px;width:67px;height:1px;background:#444;"></div>
<span class="t" style="left: 50px; top: 316.6px; font-size: 9px; --w: 190px; color: rgb(212, 40, 80); -webkit-text-stroke: 0.15px currentcolor; transform: scaleX(1.758);">A Subset M of the edge set</span>
<span class="t" style="left: 50px; top: 328.6px; font-size: 9px; --w: 185px; color: rgb(212, 40, 80); -webkit-text-stroke: 0.15px currentcolor; transform: scaleX(1.728);">E is called a Matching of G</span>
<span class="t" style="left: 52px; top: 340.6px; font-size: 9px; --w: 176px; color: rgb(212, 40, 80); -webkit-text-stroke: 0.15px currentcolor; transform: scaleX(1.8321);">if no two edges of M are</span>
<span class="t" style="left: 55px; top: 354.6px; font-size: 9px; --w: 160px; color: rgb(212, 40, 80); -webkit-text-stroke: 0.15px currentcolor; transform: scaleX(1.701);">adjacent in G i.e no two</span>
<span class="t" style="left: 57px; top: 367.6px; font-size: 9px; --w: 168px; color: rgb(212, 40, 80); -webkit-text-stroke: 0.15px currentcolor; transform: scaleX(1.786);">edges share a common</span>
<span class="t" style="left: 62px; top: 378.6px; font-size: 9px; --w: 163px; color: rgb(212, 40, 80); -webkit-text-stroke: 0.15px currentcolor; transform: scaleX(1.7934);">vertex The two ends of</span>
<span class="t" style="left: 57px; top: 388.6px; font-size: 9px; --w: 181px; color: rgb(212, 40, 80); -webkit-text-stroke: 0.15px currentcolor; transform: scaleX(1.5198);">an edge M are said to be total</span>
<svg class="a" style="left:0;top:0" width="260" height="560" viewBox="0 0 260 560"><path d="M52 455L72.5 436L76 465ZM72.5 436L119.5 437L76 465M119.5 437L125.5 466L158 449" fill="none" stroke="#d42850" stroke-width="1.2"></path><path d="M177 435V468M189 436L233 435M185 447Q195 455 199 462M200 458L236 456" fill="none" stroke="#222" stroke-width="1.1"></path><ellipse cx="196" cy="465" rx="8" ry="5" fill="none" stroke="#222" stroke-width="1.1"></ellipse></svg>
<span class="t" style="left: 54px; top: 480.6px; font-size: 9px; --w: 159px; color: rgb(26, 26, 26); -webkit-text-stroke: 0.15px currentcolor; transform: scaleX(1.517);">V(G) = {v1,v2,v3,v4,v5,v6}</span>
<span class="t" style="left: 58px; top: 495.6px; font-size: 9px; --w: 182px; color: rgb(26, 26, 26); -webkit-text-stroke: 0.15px currentcolor; transform: scaleX(1.3699);">E(G) = {e1,e2,e3,e4,e5,e6,e7,e8}</span>
<span class="t" style="left: 52px; top: 510.6px; font-size: 9px; --w: 169px; color: rgb(26, 26, 26); -webkit-text-stroke: 0.15px currentcolor; transform: scaleX(1.4912);">M1 = {e1}  Matching  under M</span>
<span class="t" style="left: 84px; top: 523.6px; font-size: 9px; --w: 146px; color: rgb(212, 40, 80); -webkit-text-stroke: 0.15px currentcolor; transform: scaleX(1.7911);">|E| = 8   {e1} {e3} {e5}</span>
<span class="t" style="left: 140px; top: 532.6px; font-size: 9px; --w: 95px; color: rgb(212, 40, 80); -webkit-text-stroke: 0.15px currentcolor; transform: scaleX(1.3269);">{e4}   {e4} {e5} {e6}</span>
<span class="t" style="left: 55px; top: 573.6px; font-size: 11px; --w: 85px; color: rgb(212, 40, 80); -webkit-text-stroke: 0.15px currentcolor; transform: scaleX(1.3556);">M2 = {e1,e5}</span>
<span class="t" style="left: 155px; top: 574.1px; font-size: 10px; --w: 53px; color: rgb(26, 26, 26); -webkit-text-stroke: 0.15px currentcolor; transform: scaleX(1.3061);">Matching</span>
<span class="t" style="left: 56px; top: 595.1px; font-size: 10px; --w: 177px; color: rgb(26, 26, 26); -webkit-text-stroke: 0.15px currentcolor; transform: scaleX(1.5124);">M3 = {e1,e7}  not Matching</span>
<svg class="a" style="left:0;top:0" width="260" height="700" viewBox="0 0 260 700"><ellipse cx="111" cy="624" rx="6" ry="4.5" fill="none" stroke="#222" stroke-width="1.1"></ellipse><ellipse cx="140" cy="624" rx="6" ry="4.5" fill="none" stroke="#222" stroke-width="1.1"></ellipse><path d="M70 668L100 652M190 667L215 663" stroke="#222" stroke-width="1.1"></path></svg>
<span class="t" style="left: 55px; top: 632.1px; font-size: 10px; --w: 180px; color: rgb(26, 26, 26); -webkit-text-stroke: 0.15px currentcolor; transform: scaleX(1.5755);">M4 = {e1,e5,e3}  Matching</span>
<span class="t" style="left: 62px; top: 651.1px; font-size: 10px; --w: 178px; color: rgb(26, 26, 26); -webkit-text-stroke: 0.15px currentcolor; transform: scaleX(1.3424);">M5 = {e1,e2,e5}  Not Matching</span>
<span class="t" style="left: 60px; top: 845.6px; font-size: 9px; --w: 179px; color: rgb(26, 26, 26); -webkit-text-stroke: 0.15px currentcolor; transform: scaleX(1.5513);">adjacent to v. if all Previously</span>
<span class="t" style="left: 63px; top: 858.6px; font-size: 9px; --w: 154px; color: rgb(26, 26, 26); -webkit-text-stroke: 0.15px currentcolor; transform: scaleX(1.7291);">used colors appear on</span>
<span class="t" style="left: 67px; top: 869.6px; font-size: 9px; --w: 162px; color: rgb(26, 26, 26); -webkit-text-stroke: 0.15px currentcolor; transform: scaleX(1.6137);">vertices adjacent to v, we</span>
<span class="t" style="left: 72px; top: 880.6px; font-size: 9px; --w: 149px; color: rgb(26, 26, 26); -webkit-text-stroke: 0.15px currentcolor; transform: scaleX(1.7417);">Must introduce a new</span>
<span class="t" style="left: 74px; top: 895.6px; font-size: 9px; --w: 113px; color: rgb(26, 26, 26); -webkit-text-stroke: 0.15px currentcolor; transform: scaleX(1.6021);">color &amp; number it.</span>
<span class="t" style="left: 51px; top: 912.6px; font-size: 9px; --w: 190px; color: rgb(26, 26, 26); -webkit-text-stroke: 0.15px currentcolor; transform: scaleX(1.4607);">Step3) Repeat the Previous step</span>
<span class="t" style="left: 91px; top: 924.6px; font-size: 9px; --w: 133px; color: rgb(26, 26, 26); -webkit-text-stroke: 0.15px currentcolor; transform: scaleX(1.6825);">Until all the Vertices</span>
<span class="t" style="left: 101px; top: 937.6px; font-size: 9px; --w: 76px; color: rgb(26, 26, 26); -webkit-text-stroke: 0.15px currentcolor; transform: scaleX(1.6159);">are Colored</span>
<div class="a" style="left:442px;top:236px;width:1309px;height:736px;background:#ffffff;"></div>
<svg class="a" style="left:0;top:0" width="1920" height="1080" viewBox="0 0 1920 1080"><g transform="translate(470 240) scale(0.17188037126160194)"><path d="M430 150C423.3 141.7 411.7 109.2 390 100C368.3 90.8 331.7 85.0 300 95C268.3 105.0 222.5 132.5 200 160C177.5 187.5 165.0 225.0 165 260C165.0 295.0 177.5 342.5 200 370C222.5 397.5 265.0 418.3 300 425C335.0 431.7 380.0 422.5 410 410C440.0 397.5 465.0 371.7 480 350C495.0 328.3 496.7 291.7 500 280M365 278C379.2 274.2 420.0 260.5 450 255C480.0 249.5 529.2 246.7 545 245M545 250C552.5 263.3 576.7 295.8 590 330C603.3 364.2 619.2 434.2 625 455M660 265C666.7 279.2 686.7 319.2 700 350C713.3 380.8 725.0 455.0 740 450C755.0 445.0 772.5 356.7 790 320C807.5 283.3 835.8 245.0 845 230M890 365C901.7 361.7 945.8 355.8 960 345C974.2 334.2 981.7 310.0 975 300C968.3 290.0 935.8 278.3 920 285C904.2 291.7 884.2 315.8 880 340C875.8 364.2 883.3 410.0 895 430C906.7 450.0 930.8 455.8 950 460C969.2 464.2 1000.0 455.8 1010 455M1065 360C1077.5 355.8 1125.8 345.0 1140 335C1154.2 325.0 1158.3 307.5 1150 300C1141.7 292.5 1105.0 281.7 1090 290C1075.0 298.3 1060.0 330.0 1060 350C1060.0 370.0 1075.0 398.3 1090 410C1105.0 421.7 1129.2 420.8 1150 420C1170.8 419.2 1204.2 407.5 1215 405M1385 300C1370.8 296.7 1325.5 276.3 1300 280C1274.5 283.7 1244.0 305.0 1232 322C1220.0 339.0 1219.7 367.3 1228 382C1236.3 396.7 1259.7 407.7 1282 410C1304.3 412.3 1342.3 405.7 1362 396C1381.7 386.3 1393.7 359.3 1400 352M1290 125C1303.3 150.8 1344.2 231.7 1370 280C1395.8 328.3 1432.5 392.5 1445 415M1500 250C1491.7 258.3 1453.3 280.8 1450 300C1446.7 319.2 1460.0 350.8 1480 365C1500.0 379.2 1543.3 390.8 1570 385C1596.7 379.2 1628.3 339.2 1640 330M1620 255C1631.7 274.2 1663.3 322.5 1690 370C1716.7 417.5 1755.0 485.0 1780 540C1805.0 595.0 1825.0 650.0 1840 700C1855.0 750.0 1880.0 823.3 1870 840C1860.0 856.7 1816.7 823.3 1780 800C1743.3 776.7 1681.7 736.7 1650 700C1618.3 663.3 1595.0 616.7 1590 580C1585.0 543.3 1598.3 510.0 1620 480C1641.7 450.0 1690.0 423.3 1720 400C1750.0 376.7 1800.0 351.7 1800 340C1800.0 328.3 1733.3 331.7 1720 330" fill="none" stroke="#dc0a2d" stroke-width="37.82" stroke-linecap="round" stroke-linejoin="round"></path></g><g transform="translate(850 240) scale(0.25)"><path d="M70 320C77.5 305.0 100.0 260.0 115 230C130.0 200.0 145.0 140.0 160 140C175.0 140.0 190.8 200.8 205 230C219.2 259.2 238.3 300.8 245 315M60 268C75.0 266.3 119.2 261.8 150 258C180.8 254.2 229.2 247.2 245 245M255 140C260.0 153.3 275.0 193.3 285 220C295.0 246.7 310.0 286.7 315 300M465 215C455.8 212.5 427.5 196.7 410 200C392.5 203.3 365.8 220.8 360 235C354.2 249.2 361.7 275.8 375 285C388.3 294.2 424.2 297.5 440 290C455.8 282.5 465.0 248.3 470 240M460 220C466.7 236.7 483.3 280.0 500 320C516.7 360.0 543.3 416.7 560 460C576.7 503.3 592.5 548.3 600 580C607.5 611.7 618.3 650.0 605 650C591.7 650.0 550.8 605.0 520 580C489.2 555.0 445.0 530.0 420 500C395.0 470.0 373.3 428.3 370 400C366.7 371.7 386.7 345.0 400 330C413.3 315.0 441.7 313.3 450 310M565 190C555.8 195.8 518.3 209.2 510 225C501.7 240.8 503.3 272.5 515 285C526.7 297.5 562.5 304.2 580 300C597.5 295.8 615.0 275.8 620 260C625.0 244.2 619.2 216.7 610 205C600.8 193.3 572.5 192.5 565 190M560 240L562 242M655 200C659.2 207.5 672.5 230.0 680 245C687.5 260.0 696.7 282.5 700 290M670 240C678.3 232.5 704.2 203.3 720 195C735.8 186.7 757.5 190.8 765 190M770 185C772.5 193.3 780.0 218.3 785 235C790.0 251.7 797.5 276.7 800 285M758 110L762 115M845 135C850.8 150.8 868.3 199.2 880 230C891.7 260.8 909.2 305.0 915 320M815 210C825.8 208.3 859.2 202.5 880 200C900.8 197.5 930.0 195.8 940 195M905 125C909.2 140.0 921.7 185.8 930 215C938.3 244.2 950.8 285.8 955 300M940 245C950.0 237.5 981.7 204.2 1000 200C1018.3 195.8 1039.2 201.7 1050 220C1060.8 238.3 1062.5 295.0 1065 310M1100 215C1103.3 220.8 1114.2 238.3 1120 250C1125.8 261.7 1132.5 279.2 1135 285M1125 235C1135.8 227.5 1169.2 192.5 1190 190C1210.8 187.5 1235.0 204.2 1250 220C1265.0 235.8 1275.0 274.2 1280 285M1265 230C1277.5 221.7 1310.8 182.5 1340 180C1369.2 177.5 1420.8 198.3 1440 215C1459.2 231.7 1460.0 265.8 1455 280C1450.0 294.2 1417.5 296.7 1410 300M80 565C93.3 575.0 135.0 605.8 160 625C185.0 644.2 216.7 685.8 230 680C243.3 674.2 237.5 618.3 240 590C242.5 561.7 244.2 523.3 245 510M300 640C307.5 636.7 338.3 630.0 345 620C351.7 610.0 347.5 585.0 340 580C332.5 575.0 308.3 578.3 300 590C291.7 601.7 285.0 631.7 290 650C295.0 668.3 310.0 693.3 330 700C350.0 706.7 396.7 691.7 410 690M440 600C442.5 607.5 450.0 630.0 455 645C460.0 660.0 467.5 682.5 470 690M450 635C456.7 629.2 477.5 606.7 490 600C502.5 593.3 519.2 595.8 525 595M565 440C570.8 463.3 590.8 534.2 600 580C609.2 625.8 616.7 692.5 620 715M520 612C533.3 611.0 571.7 608.0 600 606C628.3 604.0 675.0 601.0 690 600M655 600C659.2 609.2 672.5 636.7 680 655C687.5 673.3 696.7 700.8 700 710M690 520L692 525M830 600C820.0 599.2 785.8 586.7 770 595C754.2 603.3 736.7 631.7 735 650C733.3 668.3 744.2 694.2 760 705C775.8 715.8 818.3 713.3 830 715M880 650C891.7 649.2 935.8 653.3 950 645C964.2 636.7 971.7 610.0 965 600C958.3 590.0 925.8 579.2 910 585C894.2 590.8 871.7 617.5 870 635C868.3 652.5 880.0 679.2 900 690C920.0 700.8 975.0 698.3 990 700M1140 580C1128.3 577.5 1086.7 560.0 1070 565C1053.3 570.0 1033.3 597.5 1040 610C1046.7 622.5 1088.3 630.0 1110 640C1131.7 650.0 1168.3 661.7 1170 670C1171.7 678.3 1143.3 689.2 1120 690C1096.7 690.8 1045.0 677.5 1030 675M1475 530C1465.0 536.7 1424.2 551.7 1415 570C1405.8 588.3 1407.5 625.0 1420 640C1432.5 655.0 1469.2 665.0 1490 660C1510.8 655.0 1538.3 629.2 1545 610C1551.7 590.8 1541.7 558.3 1530 545C1518.3 531.7 1484.2 532.5 1475 530M1600 460C1604.2 483.3 1618.3 556.7 1625 600C1631.7 643.3 1637.5 700.0 1640 720M1600 470C1611.7 471.7 1653.3 471.7 1670 480C1686.7 488.3 1701.7 507.5 1700 520C1698.3 532.5 1674.2 547.5 1660 555C1645.8 562.5 1622.5 563.3 1615 565M1540 612C1553.3 612.0 1593.3 611.5 1620 612C1646.7 612.5 1686.7 614.5 1700 615" fill="none" stroke="#dc0a2d" stroke-width="26.00" stroke-linecap="round" stroke-linejoin="round"></path></g><g transform="translate(470 240) scale(0.17188037126160194)"><path d="M475 665C579.2 662.5 810.7 650.2 1100 650C1389.3 649.8 2025.8 661.7 2211 664" fill="none" stroke="#0a0a0a" stroke-width="25.02" stroke-linecap="round" stroke-linejoin="round"></path></g><g transform="translate(850 240) scale(0.25)"><path d="M0 455C66.7 456.2 255.0 459.5 400 462C545.0 464.5 791.7 468.7 870 470M1480 405C1516.7 401.7 1626.7 390.0 1700 385C1773.3 380.0 1883.3 376.7 1920 375M840 785C916.7 783.3 1120.0 773.3 1300 775C1480.0 776.7 1816.7 791.7 1920 795" fill="none" stroke="#0a0a0a" stroke-width="17.20" stroke-linecap="round" stroke-linejoin="round"></path></g><g transform="translate(1270 240) scale(0.25)"><path d="M40 50C48.3 75.0 72.5 150.8 90 200C107.5 249.2 135.8 320.8 145 345M40 50C53.3 58.3 100.0 85.8 120 100C140.0 114.2 156.7 123.3 160 135C163.3 146.7 150.8 161.7 140 170C129.2 178.3 102.5 182.5 95 185M10 255C25.0 255.2 70.8 256.0 100 256C129.2 256.0 170.8 255.2 185 255M230 235C220.8 240.0 183.3 249.2 175 265C166.7 280.8 169.2 315.8 180 330C190.8 344.2 221.7 354.2 240 350C258.3 345.8 283.3 321.7 290 305C296.7 288.3 290.0 261.7 280 250C270.0 238.3 238.3 237.5 230 235M320 230C322.5 239.2 330.8 267.5 335 285C339.2 302.5 343.3 326.7 345 335M330 265C335.8 257.5 353.3 228.3 365 220C376.7 211.7 394.2 215.8 400 215M880 150C868.3 143.3 835.0 110.0 810 110C785.0 110.0 748.3 128.3 730 150C711.7 171.7 699.2 211.7 700 240C700.8 268.3 716.7 301.7 735 320C753.3 338.3 786.7 347.5 810 350C833.3 352.5 864.2 337.5 875 335M905 225C895.8 229.2 858.3 234.2 850 250C841.7 265.8 843.3 305.8 855 320C866.7 334.2 902.5 340.0 920 335C937.5 330.0 955.0 305.8 960 290C965.0 274.2 959.2 250.8 950 240C940.8 229.2 912.5 227.5 905 225M955 135C960.8 151.7 978.3 201.7 990 235C1001.7 268.3 1019.2 318.3 1025 335M1090 220C1080.8 225.0 1043.3 234.2 1035 250C1026.7 265.8 1029.2 301.7 1040 315C1050.8 328.3 1081.7 334.2 1100 330C1118.3 325.8 1143.3 305.8 1150 290C1156.7 274.2 1150.0 246.7 1140 235C1130.0 223.3 1098.3 222.5 1090 220M1190 200C1192.5 208.3 1200.8 233.3 1205 250C1209.2 266.7 1213.3 291.7 1215 300M1200 235C1206.7 227.5 1227.5 198.3 1240 190C1252.5 181.7 1269.2 185.8 1275 185M1290 220C1292.5 226.7 1300.0 247.5 1305 260C1310.0 272.5 1317.5 289.2 1320 295M1290 140L1292 145M1340 230C1341.7 235.0 1346.7 250.0 1350 260C1353.3 270.0 1358.3 285.0 1360 290M1350 255C1358.3 245.8 1383.3 205.0 1400 200C1416.7 195.0 1440.0 210.0 1450 225C1460.0 240.0 1458.3 279.2 1460 290M1640 200C1628.3 196.7 1588.3 175.0 1570 180C1551.7 185.0 1530.0 213.3 1530 230C1530.0 246.7 1551.7 273.3 1570 280C1588.3 286.7 1626.7 280.0 1640 270C1653.3 260.0 1648.3 228.3 1650 220M1645 220C1650.8 241.7 1667.5 306.7 1680 350C1692.5 393.3 1708.3 435.0 1720 480C1731.7 525.0 1745.8 590.0 1750 620C1754.2 650.0 1761.7 663.3 1745 660C1728.3 656.7 1680.8 623.3 1650 600C1619.2 576.7 1581.7 548.3 1560 520C1538.3 491.7 1520.0 460.0 1520 430C1520.0 400.0 1543.3 361.7 1560 340C1576.7 318.3 1597.5 311.7 1620 300C1642.5 288.3 1682.5 275.0 1695 270M1350 400C1349.2 420.0 1345.0 480.0 1345 520C1345.0 560.0 1349.2 620.0 1350 640M1355 570C1365.8 559.2 1397.5 511.7 1420 505C1442.5 498.3 1473.3 507.5 1490 530C1506.7 552.5 1498.3 614.2 1520 640C1541.7 665.8 1603.3 677.5 1620 685M375 585C364.2 579.2 334.2 552.5 310 550C285.8 547.5 248.3 555.0 230 570C211.7 585.0 195.8 618.3 200 640C204.2 661.7 233.3 692.5 255 700C276.7 707.5 311.7 700.0 330 685C348.3 670.0 357.5 613.3 365 610C372.5 606.7 362.5 651.7 375 665C387.5 678.3 429.2 685.8 440 690M825 520C815.0 513.3 786.7 482.5 765 480C743.3 477.5 707.5 489.2 695 505C682.5 520.8 679.2 557.5 690 575C700.8 592.5 736.7 607.5 760 610C783.3 612.5 816.7 601.7 830 590C843.3 578.3 838.3 548.3 840 540M835 540C840.0 563.3 854.2 636.7 865 680C875.8 723.3 892.5 761.7 900 800C907.5 838.3 921.7 898.3 910 910C898.3 921.7 855.0 890.0 830 870C805.0 850.0 773.3 818.3 760 790C746.7 761.7 743.3 725.0 750 700C756.7 675.0 781.7 655.8 800 640C818.3 624.2 850.0 610.8 860 605M940 520C941.7 526.7 946.7 546.7 950 560C953.3 573.3 958.3 593.3 960 600M950 545C956.7 538.3 976.7 512.5 990 505C1003.3 497.5 1023.3 500.8 1030 500M1115 535C1105.8 530.8 1079.2 509.2 1060 510C1040.8 510.8 1009.2 525.0 1000 540C990.8 555.0 994.2 586.7 1005 600C1015.8 613.3 1047.5 621.7 1065 620C1082.5 618.3 1100.8 602.5 1110 590C1119.2 577.5 1115.0 541.7 1120 545C1125.0 548.3 1136.7 599.2 1140 610M1180 520C1184.2 543.3 1197.5 615.0 1205 660C1212.5 705.0 1221.7 768.3 1225 790M1190 565C1201.7 558.3 1240.0 526.7 1260 525C1280.0 523.3 1305.0 541.7 1310 555C1315.0 568.3 1304.2 597.5 1290 605C1275.8 612.5 1235.8 600.8 1225 600" fill="none" stroke="#dc0a2d" stroke-width="26.00" stroke-linecap="round" stroke-linejoin="round"></path></g><g transform="translate(1270 240) scale(0.25)"><path d="M0 385C83.3 383.3 330.0 377.5 500 375C670.0 372.5 933.3 370.8 1020 370M0 780C116.7 783.3 461.7 791.7 700 800C938.3 808.3 1308.3 825.0 1430 830" fill="none" stroke="#0a0a0a" stroke-width="17.20" stroke-linecap="round" stroke-linejoin="round"></path></g><g transform="translate(470 435) scale(0.25)"><path d="M151 83C145.8 82.0 131.5 74.8 120 77C108.5 79.2 89.3 86.7 82 96C74.7 105.3 70.8 123.7 76 133C81.2 142.3 98.3 146.7 113 152C127.7 157.3 152.3 157.7 164 165C175.7 172.3 186.2 188.7 183 196C179.8 203.3 159.8 206.8 145 209C130.2 211.2 111.8 211.7 94 209C76.2 206.3 47.3 195.7 38 193M252 29C254.0 43.2 258.8 86.2 264 114C269.2 141.8 279.8 182.3 283 196M189 130C199.5 129.0 233.2 125.5 252 124C270.8 122.5 293.7 121.5 302 121M327 159C333.3 155.8 356.5 147.5 365 140C373.5 132.5 380.0 121.3 378 114C376.0 106.7 362.5 94.8 353 96C343.5 97.2 325.3 107.5 321 121C316.7 134.5 317.5 163.3 327 177C336.5 190.7 363.2 200.8 378 203C392.8 205.2 409.7 192.2 416 190M453 102C456.2 119.8 465.7 175.5 472 209C478.3 242.5 487.8 287.3 491 303M460 108C467.3 104.8 491.5 90.0 504 89C516.5 88.0 528.7 92.5 535 102C541.3 111.5 547.2 134.5 542 146C536.8 157.5 510.3 166.8 504 171M605 83C608.0 93.5 618.8 126.0 623 146C627.2 166.0 628.8 193.5 630 203M649 39C660.5 51.5 702.3 89.8 718 114C733.7 138.2 742.0 161.8 743 184C744.0 206.2 737.7 230.8 724 247C710.3 263.2 671.5 275.3 661 281M1097 104C1091.2 101.0 1076.7 88.3 1062 86C1047.3 83.7 1026.8 82.8 1009 90C991.2 97.2 965.7 114.8 955 129C944.3 143.2 942.0 160.8 945 175C948.0 189.2 959.5 203.5 973 214C986.5 224.5 1005.3 232.5 1026 238C1046.7 243.5 1085.2 245.5 1097 247M1122 162C1128.5 161.2 1144.5 156.0 1161 157C1177.5 158.0 1204.5 161.0 1221 168C1237.5 175.0 1254.2 187.3 1260 199C1265.8 210.7 1262.5 227.8 1256 238C1249.5 248.2 1234.5 257.7 1221 260C1207.5 262.3 1187.3 260.3 1175 252C1162.7 243.7 1149.3 222.3 1147 210C1144.7 197.7 1158.7 183.3 1161 178M1260 75C1263.5 81.0 1274.0 94.3 1281 111C1288.0 127.7 1294.3 155.5 1302 175C1309.7 194.5 1319.2 214.5 1327 228C1334.8 241.5 1345.3 251.3 1349 256M1398 168C1392.2 170.3 1369.5 172.7 1363 182C1356.5 191.3 1354.3 212.3 1359 224C1363.7 235.7 1379.2 248.5 1391 252C1402.8 255.5 1421.7 253.2 1430 245C1438.3 236.8 1443.3 215.3 1441 203C1438.7 190.7 1423.2 176.8 1416 171C1408.8 165.2 1401.0 168.5 1398 168M1455 153C1459.2 159.0 1471.2 171.8 1480 189C1488.8 206.2 1503.3 244.8 1508 256M1494 199C1499.8 191.3 1514.3 163.0 1529 153C1543.7 143.0 1573.2 141.3 1582 139M208 429C202.7 424.8 189.7 409.2 176 404C162.3 398.8 141.7 394.8 126 398C110.3 401.2 89.3 412.5 82 423C74.7 433.5 72.5 450.5 82 461C91.5 471.5 118.0 477.7 139 486C160.0 494.3 194.5 501.5 208 511C221.5 520.5 226.3 535.7 220 543C213.7 550.3 192.0 556.2 170 555C148.0 553.8 101.7 539.2 88 536M277 398C280.2 412.7 289.7 458.7 296 486C302.3 513.3 311.8 549.3 315 562M271 483C280.3 482.0 309.2 478.7 327 477C344.8 475.3 369.5 473.7 378 473M378 499C384.3 497.8 408.7 498.3 416 492C423.3 485.7 426.3 468.3 422 461C417.7 453.7 399.5 446.0 390 448C380.5 450.0 367.0 460.3 365 473C363.0 485.7 370.7 512.3 378 524C385.3 535.7 398.5 539.8 409 543C419.5 546.2 435.7 543.0 441 543M472 461C475.2 476.7 484.7 523.5 491 555C497.3 586.5 506.8 634.2 510 650M479 473C486.3 468.8 510.5 450.0 523 448C535.5 446.0 548.8 451.5 554 461C559.2 470.5 560.3 494.5 554 505C547.7 515.5 528.5 520.8 516 524C503.5 527.2 485.2 524.0 479 524M636 461C641.3 455.7 656.5 433.2 668 429C679.5 424.8 697.7 427.5 705 436C712.3 444.5 716.2 464.3 712 480C707.8 495.7 692.7 517.5 680 530C667.3 542.5 644.3 556.0 636 555C627.7 554.0 624.7 530.3 630 524C635.3 517.7 655.5 511.8 668 517C680.5 522.2 689.3 545.5 705 555C720.7 564.5 752.5 570.8 762 574M812 392C819.3 403.5 846.5 437.0 856 461C865.5 485.0 873.2 511.8 869 536C864.8 560.2 848.8 588.2 831 606C813.2 623.8 773.5 636.8 762 643M1112 439C1118.3 457.5 1136.3 514.5 1150 550C1163.7 585.5 1186.7 635.0 1194 652M1140 468C1148.0 463.5 1171.8 444.5 1188 441C1204.2 437.5 1225.2 440.7 1237 447C1248.8 453.3 1259.8 469.2 1259 479C1258.2 488.8 1245.7 498.8 1232 506C1218.3 513.2 1186.2 519.3 1177 522M1335 463C1337.7 470.2 1345.7 491.5 1351 506C1356.3 520.5 1364.3 542.7 1367 550M1318 392L1340 403M1459 463C1453.7 461.2 1436.8 449.3 1427 452C1417.2 454.7 1404.5 466.3 1400 479C1395.5 491.7 1394.7 515.3 1400 528C1405.3 540.7 1417.7 550.5 1432 555C1446.3 559.5 1477.0 555.0 1486 555M1508 420C1512.5 432.5 1526.0 471.7 1535 495C1544.0 518.3 1557.5 549.2 1562 560M1632 455C1623.0 460.0 1591.5 476.5 1578 485C1564.5 493.5 1548.2 498.8 1551 506C1553.8 513.2 1577.8 519.3 1595 528C1612.2 536.7 1644.2 553.0 1654 558" fill="none" stroke="#0a0a0a" stroke-width="27.20" stroke-linecap="round" stroke-linejoin="round"></path></g><g transform="translate(890 435) scale(0.25)"><path d="M250 150C238.3 145.0 203.3 120.0 180 120C156.7 120.0 124.2 135.0 110 150C95.8 165.0 88.3 194.2 95 210C101.7 225.8 127.5 242.5 150 245C172.5 247.5 211.7 237.5 230 225C248.3 212.5 253.3 169.2 260 170C266.7 170.8 260.0 216.7 270 230C280.0 243.3 311.7 246.7 320 250M545 140C557.5 149.2 592.5 175.8 620 195C647.5 214.2 691.7 255.8 710 255C728.3 254.2 724.7 220.8 730 190C735.3 159.2 740.0 90.0 742 70M800 185C806.7 182.5 833.3 175.0 840 170C846.7 165.0 844.2 158.3 840 155C835.8 151.7 823.3 145.8 815 150C806.7 154.2 792.5 167.5 790 180C787.5 192.5 790.8 214.2 800 225C809.2 235.8 830.0 242.2 845 245C860.0 247.8 882.5 242.5 890 242M900 145C907.5 145.5 935.0 141.3 945 148C955.0 154.7 961.7 172.2 960 185C958.3 197.8 946.7 215.0 935 225C923.3 235.0 897.5 241.7 890 245M995 145C996.2 152.5 999.2 175.0 1002 190C1004.8 205.0 1010.3 227.5 1012 235M1058 85C1060.8 98.3 1069.3 137.5 1075 165C1080.7 192.5 1089.2 235.8 1092 250M1015 160C1021.7 159.8 1041.7 159.3 1055 159C1068.3 158.7 1088.3 158.2 1095 158M1115 190C1120.8 189.2 1140.8 190.0 1150 185C1159.2 180.0 1170.0 168.3 1170 160C1170.0 151.7 1159.2 137.5 1150 135C1140.8 132.5 1121.7 135.8 1115 145C1108.3 154.2 1107.5 177.5 1110 190C1112.5 202.5 1120.0 213.3 1130 220C1140.0 226.7 1163.3 228.3 1170 230M1255 235C1249.2 230.0 1224.2 216.7 1220 205C1215.8 193.3 1221.7 175.0 1230 165C1238.3 155.0 1256.7 145.0 1270 145C1283.3 145.0 1297.5 155.0 1310 165C1322.5 175.0 1333.3 195.0 1345 205C1356.7 215.0 1365.0 221.7 1380 225C1395.0 228.3 1425.8 225.0 1435 225M1320 230C1324.2 223.3 1336.7 204.2 1345 190C1353.3 175.8 1365.8 152.5 1370 145M229 490C220.8 485.5 197.2 466.7 180 463C162.8 459.3 139.5 459.8 126 468C112.5 476.2 100.8 497.5 99 512C97.2 526.5 105.2 546.0 115 555C124.8 564.0 143.5 566.8 158 566C172.5 565.2 190.2 558.2 202 550C213.8 541.8 223.7 516.2 229 517C234.3 517.8 233.2 548.7 234 555M250 474C251.0 480.3 254.2 500.3 256 512C257.8 523.7 260.2 538.7 261 544M256 495C263.2 490.5 282.8 472.5 299 468C315.2 463.5 335.8 462.5 353 468C370.2 473.5 393.0 489.2 402 501C411.0 512.8 412.3 528.2 407 539C401.7 549.8 376.2 561.5 370 566M660 470C653.3 475.0 623.3 486.7 620 500C616.7 513.3 623.3 540.0 640 550C656.7 560.0 693.3 570.0 720 560C746.7 550.0 783.3 491.7 800 490C816.7 488.3 816.7 540.0 820 550M850 480C851.7 485.8 856.7 503.3 860 515C863.3 526.7 868.3 544.2 870 550M860 510C870.0 503.3 901.7 473.3 920 470C938.3 466.7 960.8 478.3 970 490C979.2 501.7 974.2 531.7 975 540M1100 470C1091.7 468.3 1063.3 453.3 1050 460C1036.7 466.7 1020.0 493.3 1020 510C1020.0 526.7 1035.0 550.0 1050 560C1065.0 570.0 1100.0 568.3 1110 570M1190 460C1183.3 464.2 1156.7 470.8 1150 485C1143.3 499.2 1141.7 532.5 1150 545C1158.3 557.5 1185.0 564.2 1200 560C1215.0 555.8 1235.0 535.0 1240 520C1245.0 505.0 1238.3 480.0 1230 470C1221.7 460.0 1196.7 461.7 1190 460M1260 390C1264.2 405.0 1276.7 450.0 1285 480C1293.3 510.0 1305.8 555.0 1310 570M1370 470C1364.2 473.3 1340.8 478.3 1335 490C1329.2 501.7 1328.3 529.2 1335 540C1341.7 550.8 1361.7 558.3 1375 555C1388.3 551.7 1410.0 532.5 1415 520C1420.0 507.5 1412.5 488.3 1405 480C1397.5 471.7 1375.8 471.7 1370 470M1430 480C1431.7 485.8 1436.7 503.3 1440 515C1443.3 526.7 1448.3 544.2 1450 550M1440 500C1448.3 493.3 1475.0 466.7 1490 460C1505.0 453.3 1523.3 460.0 1530 460M1530 530C1540.0 528.3 1578.3 526.7 1590 520C1601.7 513.3 1606.7 498.3 1600 490C1593.3 481.7 1561.7 466.7 1550 470C1538.3 473.3 1530.0 495.0 1530 510C1530.0 525.0 1535.0 550.0 1550 560C1565.0 570.0 1608.3 568.3 1620 570" fill="none" stroke="#0a0a0a" stroke-width="27.20" stroke-linecap="round" stroke-linejoin="round"></path></g><g transform="translate(1290 435) scale(0.25)"><path d="M100 450C91.7 453.3 61.7 458.3 50 470C38.3 481.7 25.0 505.0 30 520C35.0 535.0 58.3 558.3 80 560C101.7 561.7 146.7 535.0 160 530M120 395C125.0 415.8 140.8 477.5 150 520C159.2 562.5 170.8 628.3 175 650M142 137C136.3 138.3 117.8 136.5 108 145C98.2 153.5 83.0 173.7 83 188C83.0 202.3 93.8 224.5 108 231C122.2 237.5 146.7 234.2 168 227C189.3 219.8 220.3 197.3 236 188C251.7 178.7 257.7 166.7 262 171C266.3 175.3 256.3 201.8 262 214C267.7 226.2 281.8 239.8 296 244C310.2 248.2 334.8 246.8 347 239C359.2 231.2 367.5 212.7 369 197C370.5 181.3 365.3 157.8 356 145C346.7 132.2 325.8 122.8 313 120C300.2 117.2 284.7 126.7 279 128M441 162C442.2 168.5 445.8 188.2 448 201C450.2 213.8 453.0 232.7 454 239M433 73L435 79M527 107C528.3 119.2 532.2 157.2 535 180C537.8 202.8 542.5 233.3 544 244M500 165C505.0 164.5 519.2 162.8 530 162C540.8 161.2 559.2 160.3 565 160M591 90C592.0 101.3 594.8 136.0 597 158C599.2 180.0 602.8 211.3 604 222M595 162C603.5 158.5 627.5 139.5 646 141C664.5 142.5 693.8 157.5 706 171C718.2 184.5 725.3 208.5 719 222C712.7 235.5 676.5 247.0 668 252M1005 145C996.5 143.7 968.2 131.2 954 137C939.8 142.8 924.3 163.0 920 180C915.7 197.0 918.0 224.8 928 239C938.0 253.2 971.3 260.7 980 265M1056 180C1049.0 182.8 1021.0 187.2 1014 197C1007.0 206.8 1007.0 229.8 1014 239C1021.0 248.2 1043.2 253.3 1056 252C1068.8 250.7 1085.2 241.7 1091 231C1096.8 220.3 1096.8 196.5 1091 188C1085.2 179.5 1061.8 181.3 1056 180M1142 124C1144.8 136.2 1153.3 170.7 1159 197C1164.7 223.3 1173.2 267.8 1176 282M1270 180C1260.0 184.2 1220.0 192.3 1210 205C1200.0 217.7 1201.5 244.5 1210 256C1218.5 267.5 1242.5 275.3 1261 274C1279.5 272.7 1311.0 260.8 1321 248C1331.0 235.2 1329.5 208.3 1321 197C1312.5 185.7 1278.5 182.8 1270 180M1338 180C1342.3 188.5 1355.3 213.3 1364 231C1372.7 248.7 1385.7 276.8 1390 286M1355 214C1362.2 208.3 1382.3 187.2 1398 180C1413.7 172.8 1440.5 172.5 1449 171M1577 133C1581.3 146.5 1594.3 184.8 1603 214C1611.7 243.2 1624.7 292.3 1629 308M332 459C343.3 463.3 372.3 471.8 400 485C427.7 498.2 478.0 543.0 498 538C518.0 533.0 516.3 487.0 520 455C523.7 423.0 520.0 364.2 520 346M595 492C601.2 489.7 624.5 486.7 632 478C639.5 469.3 643.7 450.0 640 440C636.3 430.0 620.0 415.5 610 418C600.0 420.5 583.7 437.7 580 455C576.3 472.3 580.5 506.3 588 522C595.5 537.7 608.8 544.5 625 549C641.2 553.5 675.0 549.0 685 549M704 455C714.7 453.2 747.3 445.2 768 444C788.7 442.8 821.8 440.0 828 448C834.2 456.0 820.0 476.5 805 492C790.0 507.5 749.2 532.8 738 541M858 429C859.2 438.3 862.7 466.8 865 485C867.3 503.2 870.8 529.2 872 538M902 402C904.7 415.8 912.3 459.3 918 485C923.7 510.7 933.0 544.2 936 556M828 478C844.2 477.5 891.3 474.5 925 475C958.7 475.5 1012.5 480.0 1030 481M1000 508C1005.0 506.7 1023.7 505.0 1030 500C1036.3 495.0 1040.5 483.0 1038 478C1035.5 473.0 1022.7 466.3 1015 470C1007.3 473.7 994.5 488.7 992 500C989.5 511.3 993.7 531.2 1000 538C1006.3 544.8 1018.7 541.0 1030 541C1041.3 541.0 1061.7 538.5 1068 538M1150 538C1143.7 531.7 1114.5 513.8 1112 500C1109.5 486.2 1122.3 465.0 1135 455C1147.7 445.0 1171.8 438.8 1188 440C1204.2 441.2 1217.0 449.5 1232 462C1247.0 474.5 1264.2 501.2 1278 515C1291.8 528.8 1302.7 539.3 1315 545C1327.3 550.7 1345.8 548.3 1352 549M1218 538C1223.0 530.3 1239.3 509.0 1248 492C1256.7 475.0 1266.3 445.3 1270 436M1480 455C1483.7 462.5 1494.5 485.0 1502 500C1509.5 515.0 1517.3 550.0 1525 545C1532.7 540.0 1543.0 491.8 1548 470C1553.0 448.2 1553.8 423.3 1555 414M1645 534L1647 536" fill="none" stroke="#0a0a0a" stroke-width="27.20" stroke-linecap="round" stroke-linejoin="round"></path></g><g transform="translate(690 585) scale(0.25)"><path d="M177 164C173.5 159.7 166.3 143.2 156 138C145.7 132.8 129.7 128.7 115 133C100.3 137.3 80.2 148.3 68 164C55.8 179.7 42.8 206.2 42 227C41.2 247.8 50.8 274.3 63 289C75.2 303.7 96.0 310.7 115 315C134.0 319.3 166.7 315.0 177 315M255 206C249.0 207.7 224.2 207.3 219 216C213.8 224.7 217.2 247.5 224 258C230.8 268.5 248.7 277.3 260 279C271.3 280.7 286.7 275.8 292 268C297.3 260.2 295.5 241.5 292 232C288.5 222.5 279.7 214.5 271 211C262.3 207.5 245.2 211.0 240 211M297 138C301.3 151.0 315.2 189.0 323 216C330.8 243.0 340.5 286.0 344 300M422 195C415.0 198.5 387.8 203.8 380 216C372.2 228.2 369.8 253.2 375 268C380.2 282.8 397.2 300.7 411 305C424.8 309.3 448.3 304.5 458 294C467.7 283.5 471.5 256.7 469 242C466.5 227.3 450.8 213.8 443 206C435.2 198.2 425.5 196.8 422 195M479 190C484.2 198.7 499.5 223.7 510 242C520.5 260.3 536.7 290.3 542 300M516 232C520.3 225.8 531.7 202.8 542 195C552.3 187.2 572.0 186.7 578 185M766 198C767.3 204.7 771.5 225.3 774 238C776.5 250.7 779.8 268.0 781 274M752 143L762 162M818 128C822.3 138.3 836.2 163.2 844 190C851.8 216.8 852.8 271.7 865 289C877.2 306.3 908.3 293.2 917 294M828 201C835.8 200.2 858.5 197.0 875 196C891.5 195.0 918.3 195.2 927 195M1149 169C1140.7 169.5 1110.8 163.8 1099 172C1087.2 180.2 1076.8 202.7 1078 218C1079.2 233.3 1091.8 256.8 1106 264C1120.2 271.2 1146.5 268.7 1163 261C1179.5 253.3 1198.5 228.7 1205 218C1211.5 207.3 1201.3 192.2 1202 197C1202.7 201.8 1201.3 234.0 1209 247C1216.7 260.0 1234.5 272.7 1248 275C1261.5 277.3 1279.3 272.8 1290 261C1300.7 249.2 1310.7 224.2 1312 204C1313.3 183.8 1308.7 155.3 1298 140C1287.3 124.7 1259.3 113.7 1248 112C1236.7 110.3 1233.0 127.0 1230 130M1368 183C1369.2 189.5 1372.5 209.0 1375 222C1377.5 235.0 1381.7 254.5 1383 261M1365 116L1366 118M1418 126C1421.5 140.2 1432.5 186.2 1439 211C1445.5 235.8 1454.0 264.3 1457 275M1393 190C1398.3 189.8 1415.0 189.7 1425 189C1435.0 188.3 1448.3 186.5 1453 186M1482 105C1484.3 120.3 1490.7 166.3 1496 197C1501.3 227.7 1511.0 273.7 1514 289M1496 211C1503.0 206.3 1520.3 185.3 1538 183C1555.7 180.7 1585.3 186.3 1602 197C1618.7 207.7 1634.5 232.8 1638 247C1641.5 261.2 1629.0 275.5 1623 282C1617.0 288.5 1605.5 285.3 1602 286M153 429C157.2 442.0 170.3 483.5 178 507C185.7 530.5 195.5 559.5 199 570M171 493C179.2 485.8 201.2 456.5 220 450C238.8 443.5 265.0 444.5 284 454C303.0 463.5 322.2 491.2 334 507C345.8 522.8 343.2 538.5 355 549C366.8 559.5 387.3 568.2 405 570C422.7 571.8 445.7 569.3 461 560C476.3 550.7 489.8 530.0 497 514C504.2 498.0 502.8 472.3 504 464M298 563L341 528M504 464C505.7 471.2 510.5 492.8 514 507C517.5 521.2 523.2 542.0 525 549M553 471C554.8 478.2 560.3 499.8 564 514C567.7 528.2 573.2 549.0 575 556M564 500C572.8 495.2 601.0 472.2 617 471C633.0 469.8 651.2 478.8 660 493C668.8 507.2 668.3 545.5 670 556M667 507C675.2 502.2 701.3 480.3 716 478C730.7 475.7 746.7 481.2 755 493C763.3 504.8 764.2 539.7 766 549M769 386C772.7 401.3 783.8 448.5 791 478C798.2 507.5 808.5 548.8 812 563M808 500C817.5 497.0 850.2 480.8 865 482C879.8 483.2 895.8 495.8 897 507C898.2 518.2 885.7 539.7 872 549C858.3 558.3 824.5 560.7 815 563M915 514C924.3 510.5 960.5 500.2 971 493C981.5 485.8 982.7 476.3 978 471C973.3 465.7 956.0 457.3 943 461C930.0 464.7 909.5 479.5 900 493C890.5 506.5 880.0 529.2 886 542C892.0 554.8 910.0 568.2 936 570C962.0 571.8 1024.3 555.8 1042 553M1049 464C1052.5 471.2 1062.8 492.8 1070 507C1077.2 521.2 1088.3 542.0 1092 549M1063 493C1070.2 487.7 1093.5 467.5 1106 461C1118.5 454.5 1132.7 455.2 1138 454M1113 514C1121.3 511.7 1153.0 506.0 1163 500C1173.0 494.0 1177.8 483.3 1173 478C1168.2 472.7 1145.2 463.2 1134 468C1122.8 472.8 1108.3 493.5 1106 507C1103.7 520.5 1103.5 541.3 1120 549C1136.5 556.7 1190.8 552.3 1205 553M1354 485C1345.7 480.3 1319.3 455.7 1304 457C1288.7 458.3 1267.8 478.8 1262 493C1256.2 507.2 1257.2 531.5 1269 542C1280.8 552.5 1315.3 557.2 1333 556C1350.7 554.8 1368.0 538.5 1375 535M1347 408C1351.7 424.5 1366.8 474.0 1375 507C1383.2 540.0 1392.5 589.5 1396 606" fill="none" stroke="#0a0a0a" stroke-width="27.20" stroke-linecap="round" stroke-linejoin="round"></path></g><g transform="translate(1110 585) scale(0.25)"><path d="M156 91C159.5 102.8 168.8 136.0 177 162C185.2 188.0 200.3 232.8 205 247M113 155C127.2 153.8 169.7 150.5 198 148C226.3 145.5 268.8 141.3 283 140M234 70C237.5 85.3 248.0 133.7 255 162C262.0 190.3 272.5 227.0 276 240M269 197C276.2 191.2 296.7 169.0 312 162C327.3 155.0 352.8 156.2 361 155M390 236C400.5 230.2 431.8 210.5 453 201C474.2 191.5 509.3 188.8 517 179C524.7 169.2 510.8 147.8 499 142C487.2 136.2 462.5 137.2 446 144C429.5 150.8 402.3 168.2 400 183C397.7 197.8 412.5 222.3 432 233C451.5 243.7 491.0 245.8 517 247C543.0 248.2 576.2 241.2 588 240M785 42C786.0 57.0 788.2 98.2 791 132C793.8 165.8 791.8 228.0 802 245C812.2 262.0 833.3 235.3 852 234C870.7 232.7 903.7 236.5 914 237M1010 149C1000.7 151.8 966.2 155.7 954 166C941.8 176.3 935.2 196.8 937 211C938.8 225.2 952.8 243.5 965 251C977.2 258.5 996.8 260.8 1010 256C1023.2 251.2 1039.3 236.0 1044 222C1048.7 208.0 1043.7 184.2 1038 172C1032.3 159.8 1014.7 152.8 1010 149M971 180L972 182M1100 138C1095.3 141.8 1077.7 149.7 1072 161C1066.3 172.3 1061.3 194.8 1066 206C1070.7 217.2 1088.7 225.3 1100 228C1111.3 230.7 1128.3 223.0 1134 222M1184 172C1185.0 178.5 1182.5 201.7 1190 211C1197.5 220.3 1215.0 228.0 1229 228C1243.0 228.0 1263.7 224.2 1274 211C1284.3 197.8 1291.0 167.7 1291 149C1291.0 130.3 1281.5 108.3 1274 99C1266.5 89.7 1250.7 94.0 1246 93M1359 172C1368.3 170.2 1402.8 167.7 1415 161C1427.2 154.3 1435.8 139.5 1432 132C1428.2 124.5 1405.2 113.2 1392 116C1378.8 118.8 1358.5 135.0 1353 149C1347.5 163.0 1350.5 188.7 1359 200C1367.5 211.3 1392.8 214.2 1404 217C1415.2 219.8 1422.3 217.0 1426 217M1561 132C1553.5 130.2 1529.2 118.2 1516 121C1502.8 123.8 1480.0 140.5 1482 149C1484.0 157.5 1512.0 165.3 1528 172C1544.0 178.7 1571.5 181.5 1578 189C1584.5 196.5 1584.8 210.5 1567 217C1549.2 223.5 1487.0 226.2 1471 228M1618 48C1623.5 49.0 1644.5 40.0 1651 54C1657.5 68.0 1655.2 101.2 1657 132C1658.8 162.8 1651.7 223.0 1662 239C1672.3 255.0 1709.5 229.8 1719 228M1629 138C1638.3 137.0 1666.3 133.3 1685 132C1703.7 130.7 1731.7 130.3 1741 130M48 435C41.0 430.7 20.2 408.0 6 409C-8.2 410.0 -28.2 425.2 -37 441C-45.8 456.8 -50.7 486.5 -47 504C-43.3 521.5 -32.5 539.0 -15 546C2.5 553.0 45.8 546.0 58 546M122 472C115.8 475.5 90.3 482.3 85 493C79.7 503.7 82.2 527.2 90 536C97.8 544.8 118.8 547.8 132 546C145.2 544.2 162.8 535.5 169 525C175.2 514.5 176.8 491.8 169 483C161.2 474.2 129.8 473.8 122 472M243 398C245.7 410.3 252.8 447.3 259 472C265.2 496.7 276.5 533.7 280 546M386 462C377.2 465.5 341.8 470.7 333 483C324.2 495.3 324.2 524.5 333 536C341.8 547.5 368.5 553.8 386 552C403.5 550.2 430.2 537.3 438 525C445.8 512.7 441.7 488.5 433 478C424.3 467.5 393.8 464.7 386 462M475 457C481.2 464.8 500.5 489.2 512 504C523.5 518.8 538.7 539.0 544 546M491 483C498.2 478.7 518.2 462.3 534 457C549.8 451.7 577.3 452.0 586 451M871 399C875.7 412.2 889.2 450.0 899 478C908.8 506.0 924.8 552.2 930 567M819 470C829.0 470.3 859.2 471.7 879 472C898.8 472.3 928.2 472.0 938 472M954 377L974 395M954 377C954.7 387.3 955.3 410.8 958 439C960.7 467.2 968.0 528.2 970 546M966 486C971.3 481.5 986.2 464.2 998 459C1009.8 453.8 1022.5 451.8 1037 455C1051.5 458.2 1074.5 468.8 1085 478C1095.5 487.2 1100.0 498.7 1100 510C1100.0 521.3 1092.2 536.8 1085 546C1077.8 555.2 1066.3 560.5 1057 565C1047.7 569.5 1033.7 571.7 1029 573M1203 494C1201.7 486.8 1202.8 460.8 1195 451C1187.2 441.2 1169.2 434.3 1156 435C1142.8 435.7 1124.7 444.5 1116 455C1107.3 465.5 1102.7 483.5 1104 498C1105.3 512.5 1114.0 533.3 1124 542C1134.0 550.7 1148.8 550.7 1164 550C1179.2 549.3 1202.5 546.7 1215 538C1227.5 529.3 1234.3 509.3 1239 498C1243.7 486.7 1242.3 474.7 1243 470M1241 478C1242.7 484.7 1245.3 507.3 1251 518C1256.7 528.7 1264.5 536.7 1275 542C1285.5 547.3 1307.5 548.7 1314 550M1346 399C1350.7 412.2 1365.5 449.7 1374 478C1382.5 506.3 1393.2 553.8 1397 569M1318 463C1328.0 462.0 1357.5 457.7 1378 457C1398.5 456.3 1430.5 458.7 1441 459" fill="none" stroke="#0a0a0a" stroke-width="27.20" stroke-linecap="round" stroke-linejoin="round"></path></g><g transform="translate(1280 650) scale(0.25)"><path d="M947 58C951.0 74.0 963.8 124.3 971 154C978.2 183.7 986.8 222.3 990 236M985 173C989.8 167.5 1002.0 147.2 1014 140C1026.0 132.8 1041.8 127.7 1057 130C1072.2 132.3 1094.5 143.7 1105 154C1115.5 164.3 1120.8 180.8 1120 192C1119.2 203.2 1107.3 214.5 1100 221C1092.7 227.5 1080.0 229.3 1076 231M1263 154C1256.7 148.5 1239.3 124.2 1225 121C1210.7 117.8 1189.0 125.5 1177 135C1165.0 144.5 1153.8 164.5 1153 178C1152.2 191.5 1161.7 208.0 1172 216C1182.3 224.0 1201.3 227.5 1215 226C1228.7 224.5 1246.0 217.3 1254 207C1262.0 196.7 1260.7 164.0 1263 164C1265.3 164.0 1264.0 196.7 1268 207C1272.0 217.3 1283.8 222.8 1287 226M1441 121C1436.2 118.5 1424.8 105.3 1412 106C1399.2 106.7 1376.8 115.3 1364 125C1351.2 134.7 1331.8 157.5 1335 164C1338.2 170.5 1363.0 161.7 1383 164C1403.0 166.3 1435.0 170.8 1455 178C1475.0 185.2 1495.8 198.2 1503 207C1510.2 215.8 1510.0 225.5 1498 231C1486.0 236.5 1450.2 239.2 1431 240C1411.8 240.8 1391.0 236.7 1383 236" fill="none" stroke="#0a0a0a" stroke-width="27.20" stroke-linecap="round" stroke-linejoin="round"></path></g><g transform="translate(1440 740) scale(0.16666666666666666)"><path d="M720 100C706.7 91.7 670.0 53.3 640 50C610.0 46.7 565.0 60.0 540 80C515.0 100.0 491.7 143.3 490 170C488.3 196.7 508.3 228.3 530 240C551.7 251.7 591.7 251.7 620 240C648.3 228.3 683.3 195.0 700 170C716.7 145.0 715.0 86.7 720 90C725.0 93.3 721.7 166.7 730 190C738.3 213.3 763.3 223.3 770 230M820 80C822.5 90.8 830.0 123.3 835 145C840.0 166.7 847.5 199.2 850 210M830 130C841.7 123.3 875.0 93.3 900 90C925.0 86.7 960.0 96.7 980 110C1000.0 123.3 1020.0 151.7 1020 170C1020.0 188.3 986.7 211.7 980 220M1130 90C1125.0 98.3 1098.3 123.3 1100 140C1101.7 156.7 1118.3 180.0 1140 190C1161.7 200.0 1208.3 208.3 1230 200C1251.7 191.7 1263.3 160.0 1270 140C1276.7 120.0 1270.0 90.0 1270 80M1270 80C1273.3 116.7 1281.7 243.3 1290 300C1298.3 356.7 1313.3 380.0 1320 420C1326.7 460.0 1343.3 531.7 1330 540C1316.7 548.3 1260.0 493.3 1240 470C1220.0 446.7 1206.7 423.3 1210 400C1213.3 376.7 1228.3 355.0 1260 330C1291.7 305.0 1335.0 284.2 1400 250C1465.0 215.8 1608.3 145.8 1650 125M105 580C122.5 595.0 174.2 638.3 210 670C245.8 701.7 298.3 775.0 320 770C341.7 765.0 335.0 685.0 340 640C345.0 595.0 348.3 523.3 350 500M450 640C461.7 636.7 506.7 630.0 520 620C533.3 610.0 536.7 588.3 530 580C523.3 571.7 495.0 560.0 480 570C465.0 580.0 440.0 611.7 440 640C440.0 668.3 456.7 720.0 480 740C503.3 760.0 563.3 756.7 580 760M600 650C610.0 646.7 648.3 638.3 660 630C671.7 621.7 676.7 606.7 670 600C663.3 593.3 633.3 581.7 620 590C606.7 598.3 590.0 626.7 590 650C590.0 673.3 598.3 711.7 620 730C641.7 748.3 703.3 755.0 720 760M790 520C792.5 536.7 800.0 586.7 805 620C810.0 653.3 827.5 696.7 820 720C812.5 743.3 770.0 753.3 760 760M700 652C715.0 651.7 760.0 650.7 790 650C820.0 649.3 865.0 648.3 880 648M960 470L975 530M1080 580C1071.7 581.7 1043.3 578.3 1030 590C1016.7 601.7 1003.3 628.3 1000 650C996.7 671.7 1008.3 708.3 1010 720M1180 680C1190.0 676.7 1228.3 670.0 1240 660C1251.7 650.0 1255.0 628.3 1250 620C1245.0 611.7 1221.7 600.0 1210 610C1198.3 620.0 1178.3 655.0 1180 680C1181.7 705.0 1193.3 745.0 1220 760C1246.7 775.0 1320.0 768.3 1340 770M1620 600C1596.7 598.3 1516.7 583.3 1480 590C1443.3 596.7 1400.0 621.7 1400 640C1400.0 658.3 1436.7 686.7 1480 700C1523.3 713.3 1628.3 710.0 1660 720C1691.7 730.0 1686.7 748.3 1670 760C1653.3 771.7 1608.3 788.3 1560 790C1511.7 791.7 1410.0 773.3 1380 770" fill="none" stroke="#0a0a0a" stroke-width="40.80" stroke-linecap="round" stroke-linejoin="round"></path></g><g transform="translate(710 735) scale(0.25)"><path d="M130 156C132.0 162.3 137.5 182.5 142 194C146.5 205.5 154.5 219.8 157 225M149 186C159.3 178.3 190.3 149.5 211 140C231.7 130.5 253.7 126.3 273 129C292.3 131.7 316.8 146.5 327 156C337.2 165.5 337.8 175.8 334 186C330.2 196.2 309.0 211.8 304 217M411 156C404.7 159.2 379.3 166.7 373 175C366.7 183.3 366.7 198.3 373 206C379.3 213.7 396.8 221.0 411 221C425.2 221.0 447.7 213.0 458 206C468.3 199.0 475.7 186.8 473 179C470.3 171.2 452.3 162.8 442 159C431.7 155.2 416.2 156.5 411 156M535 117C540.2 127.3 555.2 158.5 566 179C576.8 199.5 594.3 229.8 600 240M527 190C536.0 189.3 561.7 186.0 581 186C600.3 186.0 632.7 189.3 643 190M940 75C943.2 88.5 953.3 131.7 959 156C964.7 180.3 971.5 210.2 974 221M982 156C991.0 154.0 1020.7 142.8 1036 144C1051.3 145.2 1070.2 152.7 1074 163C1077.8 173.3 1068.0 194.3 1059 206C1050.0 217.7 1031.5 227.8 1020 233C1008.5 238.2 995.0 236.3 990 237M1074 198C1081.8 195.5 1110.7 190.0 1121 183C1131.3 176.0 1138.7 163.2 1136 156C1133.3 148.8 1115.3 137.5 1105 140C1094.7 142.5 1079.2 157.5 1074 171C1068.8 184.5 1067.5 210.0 1074 221C1080.5 232.0 1098.8 235.0 1113 237C1127.2 239.0 1151.3 233.7 1159 233M1213 194C1220.7 192.2 1248.7 190.0 1259 183C1269.3 176.0 1277.5 159.8 1275 152C1272.5 144.2 1254.3 133.5 1244 136C1233.7 138.5 1217.5 152.8 1213 167C1208.5 181.2 1210.5 209.0 1217 221C1223.5 233.0 1238.5 236.3 1252 239C1265.5 241.7 1290.3 237.3 1298 237M1352 140C1353.3 145.2 1357.7 160.7 1360 171C1362.3 181.3 1365.0 196.8 1366 202M1356 163C1364.3 157.3 1387.3 133.5 1406 129C1424.7 124.5 1452.7 128.3 1468 136C1483.3 143.7 1495.5 162.7 1498 175C1500.5 187.3 1492.0 201.0 1483 210C1474.0 219.0 1450.5 225.8 1444 229M75 471C69.5 463.3 43.3 442.3 42 425C40.7 407.7 51.8 379.5 67 367C82.2 354.5 112.2 349.3 133 350C153.8 350.7 183.7 358.5 192 371C200.3 383.5 198.3 411.2 183 425C167.7 438.8 113.8 449.2 100 454M96 346C99.5 366.2 111.5 429.5 117 467C122.5 504.5 127.0 553.7 129 571M325 479C316.7 477.7 287.5 467.5 275 471C262.5 474.5 250.0 490.3 250 500C250.0 509.7 261.2 526.2 275 529C288.8 531.8 320.5 524.7 333 517C345.5 509.3 347.2 488.7 350 483M267 550C275.3 547.2 300.3 539.3 317 533C333.7 526.7 358.7 515.5 367 512M358 517C367.8 515.5 403.0 513.7 417 508C431.0 502.3 444.8 489.8 442 483C439.2 476.2 414.0 464.2 400 467C386.0 469.8 360.8 486.2 358 500C355.2 513.8 359.3 540.3 383 550C406.7 559.7 480.5 556.7 500 558M550 479C555.5 485.3 571.2 503.8 583 517C594.8 530.2 612.7 559.5 621 558C629.3 556.5 628.2 524.7 633 508C637.8 491.3 647.2 466.3 650 458M700 475C701.7 480.5 706.5 496.8 710 508C713.5 519.2 719.2 536.3 721 542M688 379L717 404M800 450C793.0 454.2 765.0 462.5 758 475C751.0 487.5 749.7 513.8 758 525C766.3 536.2 791.3 542.0 808 542C824.7 542.0 846.8 534.8 858 525C869.2 515.2 877.7 494.8 875 483C872.3 471.2 854.5 459.5 842 454C829.5 448.5 807.0 450.7 800 450M975 467C966.7 469.0 936.2 470.7 925 479C913.8 487.3 903.8 505.2 908 517C912.2 528.8 931.8 545.8 950 550C968.2 554.2 1000.3 551.7 1017 542C1033.7 532.3 1043.2 503.2 1050 492C1056.8 480.8 1058.0 470.8 1058 475C1058.0 479.2 1047.2 504.5 1050 517C1052.8 529.5 1070.8 544.5 1075 550M1150 475C1140.3 475.0 1103.2 470.8 1092 475C1080.8 479.2 1073.3 491.7 1083 500C1092.7 508.3 1137.5 516.7 1150 525C1162.5 533.3 1170.5 544.5 1158 550C1145.5 555.5 1088.8 556.7 1075 558M1192 367C1201.7 383.7 1233.3 436.5 1250 467C1266.7 497.5 1285.0 536.2 1292 550M1342 442C1335.0 448.8 1302.8 469.2 1300 483C1297.2 496.8 1311.2 518.0 1325 525C1338.8 532.0 1367.7 533.3 1383 525C1398.3 516.7 1412.8 491.7 1417 475C1421.2 458.3 1409.5 433.3 1408 425M1408 425C1412.2 445.8 1423.2 512.5 1433 550C1442.8 587.5 1454.5 619.5 1467 650C1479.5 680.5 1516.3 726.0 1508 733C1499.7 740.0 1440.5 707.2 1417 692C1393.5 676.8 1372.7 656.0 1367 642C1361.3 628.0 1367.8 620.5 1383 608C1398.2 595.5 1428.8 583.7 1458 567C1487.2 550.3 1541.3 517.8 1558 508" fill="none" stroke="#0a0a0a" stroke-width="27.20" stroke-linecap="round" stroke-linejoin="round"></path></g><g transform="translate(1120 735) scale(0.25)"><path d="M120 148C113.7 149.2 90.7 147.7 82 155C73.3 162.3 64.2 178.2 68 192C71.8 205.8 87.7 230.3 105 238C122.3 245.7 149.5 244.3 172 238C194.5 231.7 225.0 215.0 240 200C255.0 185.0 257.0 148.0 262 148C267.0 148.0 263.7 188.8 270 200C276.3 211.2 295.0 212.5 300 215M412 132C403.3 133.3 370.0 135.0 360 140C350.0 145.0 343.3 154.5 352 162C360.7 169.5 397.0 177.3 412 185C427.0 192.7 439.3 199.2 442 208C444.7 216.8 439.2 233.0 428 238C416.8 243.0 383.8 238.0 375 238M465 192C475.0 190.8 512.5 191.2 525 185C537.5 178.8 542.5 163.8 540 155C537.5 146.2 522.5 130.8 510 132C497.5 133.2 470.0 148.2 465 162C460.0 175.8 467.5 202.3 480 215C492.5 227.7 516.3 236.2 540 238C563.7 239.8 608.3 228.0 622 226M765 155C752.5 151.2 712.5 132.0 690 132C667.5 132.0 642.5 143.7 630 155C617.5 166.3 608.7 188.8 615 200C621.3 211.2 650.5 220.7 668 222C685.5 223.3 707.7 216.7 720 208C732.3 199.3 738.3 176.3 742 170M690 54C698.7 73.3 726.3 132.0 742 170C757.7 208.0 777.0 263.3 784 282M1042 102C1034.7 107.0 1005.3 117.0 998 132C990.7 147.0 989.3 175.7 998 192C1006.7 208.3 1033.8 228.7 1050 230C1066.2 231.3 1087.5 215.0 1095 200C1102.5 185.0 1103.8 156.3 1095 140C1086.2 123.7 1050.8 108.3 1042 102M1155 110C1158.2 118.2 1168.3 143.3 1174 159C1179.7 174.7 1186.5 196.5 1189 204M1170 148C1180.0 143.0 1207.5 120.7 1230 118C1252.5 115.3 1287.5 123.3 1305 132C1322.5 140.7 1338.8 158.7 1335 170C1331.2 181.3 1290.8 195.0 1282 200M285 432C275.0 429.7 243.8 414.2 225 418C206.2 421.8 182.0 436.3 172 455C162.0 473.7 158.7 510.0 165 530C171.3 550.0 191.2 567.5 210 575C228.8 582.5 258.0 578.8 278 575C298.0 571.2 321.3 555.8 330 552M398 478C389.2 483.0 353.8 494.3 345 508C336.2 521.7 337.5 546.3 345 560C352.5 573.7 373.8 588.7 390 590C406.2 591.3 430.7 579.3 442 568C453.3 556.7 460.3 535.8 458 522C455.7 508.2 438.0 492.3 428 485C418.0 477.7 403.0 479.2 398 478M488 380C494.2 397.5 513.2 452.5 525 485C536.8 517.5 553.3 560.0 559 575M645 478C637.5 481.7 608.8 488.8 600 500C591.2 511.2 587.0 532.5 592 545C597.0 557.5 616.2 572.5 630 575C643.8 577.5 665.0 570.0 675 560C685.0 550.0 691.2 527.5 690 515C688.8 502.5 675.5 491.2 668 485C660.5 478.8 648.8 479.2 645 478M720 462C725.0 469.7 741.3 493.0 750 508C758.7 523.0 768.3 544.7 772 552M742 478C748.3 473.5 767.3 456.0 780 451C792.7 446.0 811.7 448.5 818 448M862 500C870.8 497.5 905.0 491.3 915 485C925.0 478.7 925.8 468.2 922 462C918.2 455.8 903.2 445.3 892 448C880.8 450.7 860.0 464.3 855 478C850.0 491.7 853.2 518.8 862 530C870.8 541.2 889.2 543.7 908 545C926.8 546.3 963.8 539.2 975 538M1058 462C1048.0 463.3 1013.0 462.3 998 470C983.0 477.7 968.0 496.7 968 508C968.0 519.3 981.8 536.8 998 538C1014.2 539.2 1053.8 518.8 1065 515M1080 380C1083.7 397.5 1095.7 447.5 1102 485C1108.3 522.5 1115.3 585.0 1118 605" fill="none" stroke="#0a0a0a" stroke-width="27.20" stroke-linecap="round" stroke-linejoin="round"></path></g><polygon points="1392,632 1406,631 1400,642 1393,675 1392,693" fill="#1d2f55"></polygon><g transform="translate(45 704) scale(0.1505) translate(-442 -236)"><g transform="translate(470 240) scale(0.17188037126160194)"><path d="M430 150C423.3 141.7 411.7 109.2 390 100C368.3 90.8 331.7 85.0 300 95C268.3 105.0 222.5 132.5 200 160C177.5 187.5 165.0 225.0 165 260C165.0 295.0 177.5 342.5 200 370C222.5 397.5 265.0 418.3 300 425C335.0 431.7 380.0 422.5 410 410C440.0 397.5 465.0 371.7 480 350C495.0 328.3 496.7 291.7 500 280M365 278C379.2 274.2 420.0 260.5 450 255C480.0 249.5 529.2 246.7 545 245M545 250C552.5 263.3 576.7 295.8 590 330C603.3 364.2 619.2 434.2 625 455M660 265C666.7 279.2 686.7 319.2 700 350C713.3 380.8 725.0 455.0 740 450C755.0 445.0 772.5 356.7 790 320C807.5 283.3 835.8 245.0 845 230M890 365C901.7 361.7 945.8 355.8 960 345C974.2 334.2 981.7 310.0 975 300C968.3 290.0 935.8 278.3 920 285C904.2 291.7 884.2 315.8 880 340C875.8 364.2 883.3 410.0 895 430C906.7 450.0 930.8 455.8 950 460C969.2 464.2 1000.0 455.8 1010 455M1065 360C1077.5 355.8 1125.8 345.0 1140 335C1154.2 325.0 1158.3 307.5 1150 300C1141.7 292.5 1105.0 281.7 1090 290C1075.0 298.3 1060.0 330.0 1060 350C1060.0 370.0 1075.0 398.3 1090 410C1105.0 421.7 1129.2 420.8 1150 420C1170.8 419.2 1204.2 407.5 1215 405M1385 300C1370.8 296.7 1325.5 276.3 1300 280C1274.5 283.7 1244.0 305.0 1232 322C1220.0 339.0 1219.7 367.3 1228 382C1236.3 396.7 1259.7 407.7 1282 410C1304.3 412.3 1342.3 405.7 1362 396C1381.7 386.3 1393.7 359.3 1400 352M1290 125C1303.3 150.8 1344.2 231.7 1370 280C1395.8 328.3 1432.5 392.5 1445 415M1500 250C1491.7 258.3 1453.3 280.8 1450 300C1446.7 319.2 1460.0 350.8 1480 365C1500.0 379.2 1543.3 390.8 1570 385C1596.7 379.2 1628.3 339.2 1640 330M1620 255C1631.7 274.2 1663.3 322.5 1690 370C1716.7 417.5 1755.0 485.0 1780 540C1805.0 595.0 1825.0 650.0 1840 700C1855.0 750.0 1880.0 823.3 1870 840C1860.0 856.7 1816.7 823.3 1780 800C1743.3 776.7 1681.7 736.7 1650 700C1618.3 663.3 1595.0 616.7 1590 580C1585.0 543.3 1598.3 510.0 1620 480C1641.7 450.0 1690.0 423.3 1720 400C1750.0 376.7 1800.0 351.7 1800 340C1800.0 328.3 1733.3 331.7 1720 330" fill="none" stroke="#dc0a2d" stroke-width="64.29" stroke-linecap="round" stroke-linejoin="round"></path></g><g transform="translate(850 240) scale(0.25)"><path d="M70 320C77.5 305.0 100.0 260.0 115 230C130.0 200.0 145.0 140.0 160 140C175.0 140.0 190.8 200.8 205 230C219.2 259.2 238.3 300.8 245 315M60 268C75.0 266.3 119.2 261.8 150 258C180.8 254.2 229.2 247.2 245 245M255 140C260.0 153.3 275.0 193.3 285 220C295.0 246.7 310.0 286.7 315 300M465 215C455.8 212.5 427.5 196.7 410 200C392.5 203.3 365.8 220.8 360 235C354.2 249.2 361.7 275.8 375 285C388.3 294.2 424.2 297.5 440 290C455.8 282.5 465.0 248.3 470 240M460 220C466.7 236.7 483.3 280.0 500 320C516.7 360.0 543.3 416.7 560 460C576.7 503.3 592.5 548.3 600 580C607.5 611.7 618.3 650.0 605 650C591.7 650.0 550.8 605.0 520 580C489.2 555.0 445.0 530.0 420 500C395.0 470.0 373.3 428.3 370 400C366.7 371.7 386.7 345.0 400 330C413.3 315.0 441.7 313.3 450 310M565 190C555.8 195.8 518.3 209.2 510 225C501.7 240.8 503.3 272.5 515 285C526.7 297.5 562.5 304.2 580 300C597.5 295.8 615.0 275.8 620 260C625.0 244.2 619.2 216.7 610 205C600.8 193.3 572.5 192.5 565 190M560 240L562 242M655 200C659.2 207.5 672.5 230.0 680 245C687.5 260.0 696.7 282.5 700 290M670 240C678.3 232.5 704.2 203.3 720 195C735.8 186.7 757.5 190.8 765 190M770 185C772.5 193.3 780.0 218.3 785 235C790.0 251.7 797.5 276.7 800 285M758 110L762 115M845 135C850.8 150.8 868.3 199.2 880 230C891.7 260.8 909.2 305.0 915 320M815 210C825.8 208.3 859.2 202.5 880 200C900.8 197.5 930.0 195.8 940 195M905 125C909.2 140.0 921.7 185.8 930 215C938.3 244.2 950.8 285.8 955 300M940 245C950.0 237.5 981.7 204.2 1000 200C1018.3 195.8 1039.2 201.7 1050 220C1060.8 238.3 1062.5 295.0 1065 310M1100 215C1103.3 220.8 1114.2 238.3 1120 250C1125.8 261.7 1132.5 279.2 1135 285M1125 235C1135.8 227.5 1169.2 192.5 1190 190C1210.8 187.5 1235.0 204.2 1250 220C1265.0 235.8 1275.0 274.2 1280 285M1265 230C1277.5 221.7 1310.8 182.5 1340 180C1369.2 177.5 1420.8 198.3 1440 215C1459.2 231.7 1460.0 265.8 1455 280C1450.0 294.2 1417.5 296.7 1410 300M80 565C93.3 575.0 135.0 605.8 160 625C185.0 644.2 216.7 685.8 230 680C243.3 674.2 237.5 618.3 240 590C242.5 561.7 244.2 523.3 245 510M300 640C307.5 636.7 338.3 630.0 345 620C351.7 610.0 347.5 585.0 340 580C332.5 575.0 308.3 578.3 300 590C291.7 601.7 285.0 631.7 290 650C295.0 668.3 310.0 693.3 330 700C350.0 706.7 396.7 691.7 410 690M440 600C442.5 607.5 450.0 630.0 455 645C460.0 660.0 467.5 682.5 470 690M450 635C456.7 629.2 477.5 606.7 490 600C502.5 593.3 519.2 595.8 525 595M565 440C570.8 463.3 590.8 534.2 600 580C609.2 625.8 616.7 692.5 620 715M520 612C533.3 611.0 571.7 608.0 600 606C628.3 604.0 675.0 601.0 690 600M655 600C659.2 609.2 672.5 636.7 680 655C687.5 673.3 696.7 700.8 700 710M690 520L692 525M830 600C820.0 599.2 785.8 586.7 770 595C754.2 603.3 736.7 631.7 735 650C733.3 668.3 744.2 694.2 760 705C775.8 715.8 818.3 713.3 830 715M880 650C891.7 649.2 935.8 653.3 950 645C964.2 636.7 971.7 610.0 965 600C958.3 590.0 925.8 579.2 910 585C894.2 590.8 871.7 617.5 870 635C868.3 652.5 880.0 679.2 900 690C920.0 700.8 975.0 698.3 990 700M1140 580C1128.3 577.5 1086.7 560.0 1070 565C1053.3 570.0 1033.3 597.5 1040 610C1046.7 622.5 1088.3 630.0 1110 640C1131.7 650.0 1168.3 661.7 1170 670C1171.7 678.3 1143.3 689.2 1120 690C1096.7 690.8 1045.0 677.5 1030 675M1475 530C1465.0 536.7 1424.2 551.7 1415 570C1405.8 588.3 1407.5 625.0 1420 640C1432.5 655.0 1469.2 665.0 1490 660C1510.8 655.0 1538.3 629.2 1545 610C1551.7 590.8 1541.7 558.3 1530 545C1518.3 531.7 1484.2 532.5 1475 530M1600 460C1604.2 483.3 1618.3 556.7 1625 600C1631.7 643.3 1637.5 700.0 1640 720M1600 470C1611.7 471.7 1653.3 471.7 1670 480C1686.7 488.3 1701.7 507.5 1700 520C1698.3 532.5 1674.2 547.5 1660 555C1645.8 562.5 1622.5 563.3 1615 565M1540 612C1553.3 612.0 1593.3 611.5 1620 612C1646.7 612.5 1686.7 614.5 1700 615" fill="none" stroke="#dc0a2d" stroke-width="44.20" stroke-linecap="round" stroke-linejoin="round"></path></g><g transform="translate(470 240) scale(0.17188037126160194)"><path d="M475 665C579.2 662.5 810.7 650.2 1100 650C1389.3 649.8 2025.8 661.7 2211 664" fill="none" stroke="#0a0a0a" stroke-width="42.53" stroke-linecap="round" stroke-linejoin="round"></path></g><g transform="translate(850 240) scale(0.25)"><path d="M0 455C66.7 456.2 255.0 459.5 400 462C545.0 464.5 791.7 468.7 870 470M1480 405C1516.7 401.7 1626.7 390.0 1700 385C1773.3 380.0 1883.3 376.7 1920 375M840 785C916.7 783.3 1120.0 773.3 1300 775C1480.0 776.7 1816.7 791.7 1920 795" fill="none" stroke="#0a0a0a" stroke-width="29.24" stroke-linecap="round" stroke-linejoin="round"></path></g><g transform="translate(1270 240) scale(0.25)"><path d="M40 50C48.3 75.0 72.5 150.8 90 200C107.5 249.2 135.8 320.8 145 345M40 50C53.3 58.3 100.0 85.8 120 100C140.0 114.2 156.7 123.3 160 135C163.3 146.7 150.8 161.7 140 170C129.2 178.3 102.5 182.5 95 185M10 255C25.0 255.2 70.8 256.0 100 256C129.2 256.0 170.8 255.2 185 255M230 235C220.8 240.0 183.3 249.2 175 265C166.7 280.8 169.2 315.8 180 330C190.8 344.2 221.7 354.2 240 350C258.3 345.8 283.3 321.7 290 305C296.7 288.3 290.0 261.7 280 250C270.0 238.3 238.3 237.5 230 235M320 230C322.5 239.2 330.8 267.5 335 285C339.2 302.5 343.3 326.7 345 335M330 265C335.8 257.5 353.3 228.3 365 220C376.7 211.7 394.2 215.8 400 215M880 150C868.3 143.3 835.0 110.0 810 110C785.0 110.0 748.3 128.3 730 150C711.7 171.7 699.2 211.7 700 240C700.8 268.3 716.7 301.7 735 320C753.3 338.3 786.7 347.5 810 350C833.3 352.5 864.2 337.5 875 335M905 225C895.8 229.2 858.3 234.2 850 250C841.7 265.8 843.3 305.8 855 320C866.7 334.2 902.5 340.0 920 335C937.5 330.0 955.0 305.8 960 290C965.0 274.2 959.2 250.8 950 240C940.8 229.2 912.5 227.5 905 225M955 135C960.8 151.7 978.3 201.7 990 235C1001.7 268.3 1019.2 318.3 1025 335M1090 220C1080.8 225.0 1043.3 234.2 1035 250C1026.7 265.8 1029.2 301.7 1040 315C1050.8 328.3 1081.7 334.2 1100 330C1118.3 325.8 1143.3 305.8 1150 290C1156.7 274.2 1150.0 246.7 1140 235C1130.0 223.3 1098.3 222.5 1090 220M1190 200C1192.5 208.3 1200.8 233.3 1205 250C1209.2 266.7 1213.3 291.7 1215 300M1200 235C1206.7 227.5 1227.5 198.3 1240 190C1252.5 181.7 1269.2 185.8 1275 185M1290 220C1292.5 226.7 1300.0 247.5 1305 260C1310.0 272.5 1317.5 289.2 1320 295M1290 140L1292 145M1340 230C1341.7 235.0 1346.7 250.0 1350 260C1353.3 270.0 1358.3 285.0 1360 290M1350 255C1358.3 245.8 1383.3 205.0 1400 200C1416.7 195.0 1440.0 210.0 1450 225C1460.0 240.0 1458.3 279.2 1460 290M1640 200C1628.3 196.7 1588.3 175.0 1570 180C1551.7 185.0 1530.0 213.3 1530 230C1530.0 246.7 1551.7 273.3 1570 280C1588.3 286.7 1626.7 280.0 1640 270C1653.3 260.0 1648.3 228.3 1650 220M1645 220C1650.8 241.7 1667.5 306.7 1680 350C1692.5 393.3 1708.3 435.0 1720 480C1731.7 525.0 1745.8 590.0 1750 620C1754.2 650.0 1761.7 663.3 1745 660C1728.3 656.7 1680.8 623.3 1650 600C1619.2 576.7 1581.7 548.3 1560 520C1538.3 491.7 1520.0 460.0 1520 430C1520.0 400.0 1543.3 361.7 1560 340C1576.7 318.3 1597.5 311.7 1620 300C1642.5 288.3 1682.5 275.0 1695 270M1350 400C1349.2 420.0 1345.0 480.0 1345 520C1345.0 560.0 1349.2 620.0 1350 640M1355 570C1365.8 559.2 1397.5 511.7 1420 505C1442.5 498.3 1473.3 507.5 1490 530C1506.7 552.5 1498.3 614.2 1520 640C1541.7 665.8 1603.3 677.5 1620 685M375 585C364.2 579.2 334.2 552.5 310 550C285.8 547.5 248.3 555.0 230 570C211.7 585.0 195.8 618.3 200 640C204.2 661.7 233.3 692.5 255 700C276.7 707.5 311.7 700.0 330 685C348.3 670.0 357.5 613.3 365 610C372.5 606.7 362.5 651.7 375 665C387.5 678.3 429.2 685.8 440 690M825 520C815.0 513.3 786.7 482.5 765 480C743.3 477.5 707.5 489.2 695 505C682.5 520.8 679.2 557.5 690 575C700.8 592.5 736.7 607.5 760 610C783.3 612.5 816.7 601.7 830 590C843.3 578.3 838.3 548.3 840 540M835 540C840.0 563.3 854.2 636.7 865 680C875.8 723.3 892.5 761.7 900 800C907.5 838.3 921.7 898.3 910 910C898.3 921.7 855.0 890.0 830 870C805.0 850.0 773.3 818.3 760 790C746.7 761.7 743.3 725.0 750 700C756.7 675.0 781.7 655.8 800 640C818.3 624.2 850.0 610.8 860 605M940 520C941.7 526.7 946.7 546.7 950 560C953.3 573.3 958.3 593.3 960 600M950 545C956.7 538.3 976.7 512.5 990 505C1003.3 497.5 1023.3 500.8 1030 500M1115 535C1105.8 530.8 1079.2 509.2 1060 510C1040.8 510.8 1009.2 525.0 1000 540C990.8 555.0 994.2 586.7 1005 600C1015.8 613.3 1047.5 621.7 1065 620C1082.5 618.3 1100.8 602.5 1110 590C1119.2 577.5 1115.0 541.7 1120 545C1125.0 548.3 1136.7 599.2 1140 610M1180 520C1184.2 543.3 1197.5 615.0 1205 660C1212.5 705.0 1221.7 768.3 1225 790M1190 565C1201.7 558.3 1240.0 526.7 1260 525C1280.0 523.3 1305.0 541.7 1310 555C1315.0 568.3 1304.2 597.5 1290 605C1275.8 612.5 1235.8 600.8 1225 600" fill="none" stroke="#dc0a2d" stroke-width="44.20" stroke-linecap="round" stroke-linejoin="round"></path></g><g transform="translate(1270 240) scale(0.25)"><path d="M0 385C83.3 383.3 330.0 377.5 500 375C670.0 372.5 933.3 370.8 1020 370M0 780C116.7 783.3 461.7 791.7 700 800C938.3 808.3 1308.3 825.0 1430 830" fill="none" stroke="#0a0a0a" stroke-width="29.24" stroke-linecap="round" stroke-linejoin="round"></path></g><g transform="translate(470 435) scale(0.25)"><path d="M151 83C145.8 82.0 131.5 74.8 120 77C108.5 79.2 89.3 86.7 82 96C74.7 105.3 70.8 123.7 76 133C81.2 142.3 98.3 146.7 113 152C127.7 157.3 152.3 157.7 164 165C175.7 172.3 186.2 188.7 183 196C179.8 203.3 159.8 206.8 145 209C130.2 211.2 111.8 211.7 94 209C76.2 206.3 47.3 195.7 38 193M252 29C254.0 43.2 258.8 86.2 264 114C269.2 141.8 279.8 182.3 283 196M189 130C199.5 129.0 233.2 125.5 252 124C270.8 122.5 293.7 121.5 302 121M327 159C333.3 155.8 356.5 147.5 365 140C373.5 132.5 380.0 121.3 378 114C376.0 106.7 362.5 94.8 353 96C343.5 97.2 325.3 107.5 321 121C316.7 134.5 317.5 163.3 327 177C336.5 190.7 363.2 200.8 378 203C392.8 205.2 409.7 192.2 416 190M453 102C456.2 119.8 465.7 175.5 472 209C478.3 242.5 487.8 287.3 491 303M460 108C467.3 104.8 491.5 90.0 504 89C516.5 88.0 528.7 92.5 535 102C541.3 111.5 547.2 134.5 542 146C536.8 157.5 510.3 166.8 504 171M605 83C608.0 93.5 618.8 126.0 623 146C627.2 166.0 628.8 193.5 630 203M649 39C660.5 51.5 702.3 89.8 718 114C733.7 138.2 742.0 161.8 743 184C744.0 206.2 737.7 230.8 724 247C710.3 263.2 671.5 275.3 661 281M1097 104C1091.2 101.0 1076.7 88.3 1062 86C1047.3 83.7 1026.8 82.8 1009 90C991.2 97.2 965.7 114.8 955 129C944.3 143.2 942.0 160.8 945 175C948.0 189.2 959.5 203.5 973 214C986.5 224.5 1005.3 232.5 1026 238C1046.7 243.5 1085.2 245.5 1097 247M1122 162C1128.5 161.2 1144.5 156.0 1161 157C1177.5 158.0 1204.5 161.0 1221 168C1237.5 175.0 1254.2 187.3 1260 199C1265.8 210.7 1262.5 227.8 1256 238C1249.5 248.2 1234.5 257.7 1221 260C1207.5 262.3 1187.3 260.3 1175 252C1162.7 243.7 1149.3 222.3 1147 210C1144.7 197.7 1158.7 183.3 1161 178M1260 75C1263.5 81.0 1274.0 94.3 1281 111C1288.0 127.7 1294.3 155.5 1302 175C1309.7 194.5 1319.2 214.5 1327 228C1334.8 241.5 1345.3 251.3 1349 256M1398 168C1392.2 170.3 1369.5 172.7 1363 182C1356.5 191.3 1354.3 212.3 1359 224C1363.7 235.7 1379.2 248.5 1391 252C1402.8 255.5 1421.7 253.2 1430 245C1438.3 236.8 1443.3 215.3 1441 203C1438.7 190.7 1423.2 176.8 1416 171C1408.8 165.2 1401.0 168.5 1398 168M1455 153C1459.2 159.0 1471.2 171.8 1480 189C1488.8 206.2 1503.3 244.8 1508 256M1494 199C1499.8 191.3 1514.3 163.0 1529 153C1543.7 143.0 1573.2 141.3 1582 139M208 429C202.7 424.8 189.7 409.2 176 404C162.3 398.8 141.7 394.8 126 398C110.3 401.2 89.3 412.5 82 423C74.7 433.5 72.5 450.5 82 461C91.5 471.5 118.0 477.7 139 486C160.0 494.3 194.5 501.5 208 511C221.5 520.5 226.3 535.7 220 543C213.7 550.3 192.0 556.2 170 555C148.0 553.8 101.7 539.2 88 536M277 398C280.2 412.7 289.7 458.7 296 486C302.3 513.3 311.8 549.3 315 562M271 483C280.3 482.0 309.2 478.7 327 477C344.8 475.3 369.5 473.7 378 473M378 499C384.3 497.8 408.7 498.3 416 492C423.3 485.7 426.3 468.3 422 461C417.7 453.7 399.5 446.0 390 448C380.5 450.0 367.0 460.3 365 473C363.0 485.7 370.7 512.3 378 524C385.3 535.7 398.5 539.8 409 543C419.5 546.2 435.7 543.0 441 543M472 461C475.2 476.7 484.7 523.5 491 555C497.3 586.5 506.8 634.2 510 650M479 473C486.3 468.8 510.5 450.0 523 448C535.5 446.0 548.8 451.5 554 461C559.2 470.5 560.3 494.5 554 505C547.7 515.5 528.5 520.8 516 524C503.5 527.2 485.2 524.0 479 524M636 461C641.3 455.7 656.5 433.2 668 429C679.5 424.8 697.7 427.5 705 436C712.3 444.5 716.2 464.3 712 480C707.8 495.7 692.7 517.5 680 530C667.3 542.5 644.3 556.0 636 555C627.7 554.0 624.7 530.3 630 524C635.3 517.7 655.5 511.8 668 517C680.5 522.2 689.3 545.5 705 555C720.7 564.5 752.5 570.8 762 574M812 392C819.3 403.5 846.5 437.0 856 461C865.5 485.0 873.2 511.8 869 536C864.8 560.2 848.8 588.2 831 606C813.2 623.8 773.5 636.8 762 643M1112 439C1118.3 457.5 1136.3 514.5 1150 550C1163.7 585.5 1186.7 635.0 1194 652M1140 468C1148.0 463.5 1171.8 444.5 1188 441C1204.2 437.5 1225.2 440.7 1237 447C1248.8 453.3 1259.8 469.2 1259 479C1258.2 488.8 1245.7 498.8 1232 506C1218.3 513.2 1186.2 519.3 1177 522M1335 463C1337.7 470.2 1345.7 491.5 1351 506C1356.3 520.5 1364.3 542.7 1367 550M1318 392L1340 403M1459 463C1453.7 461.2 1436.8 449.3 1427 452C1417.2 454.7 1404.5 466.3 1400 479C1395.5 491.7 1394.7 515.3 1400 528C1405.3 540.7 1417.7 550.5 1432 555C1446.3 559.5 1477.0 555.0 1486 555M1508 420C1512.5 432.5 1526.0 471.7 1535 495C1544.0 518.3 1557.5 549.2 1562 560M1632 455C1623.0 460.0 1591.5 476.5 1578 485C1564.5 493.5 1548.2 498.8 1551 506C1553.8 513.2 1577.8 519.3 1595 528C1612.2 536.7 1644.2 553.0 1654 558" fill="none" stroke="#0a0a0a" stroke-width="46.24" stroke-linecap="round" stroke-linejoin="round"></path></g><g transform="translate(890 435) scale(0.25)"><path d="M250 150C238.3 145.0 203.3 120.0 180 120C156.7 120.0 124.2 135.0 110 150C95.8 165.0 88.3 194.2 95 210C101.7 225.8 127.5 242.5 150 245C172.5 247.5 211.7 237.5 230 225C248.3 212.5 253.3 169.2 260 170C266.7 170.8 260.0 216.7 270 230C280.0 243.3 311.7 246.7 320 250M545 140C557.5 149.2 592.5 175.8 620 195C647.5 214.2 691.7 255.8 710 255C728.3 254.2 724.7 220.8 730 190C735.3 159.2 740.0 90.0 742 70M800 185C806.7 182.5 833.3 175.0 840 170C846.7 165.0 844.2 158.3 840 155C835.8 151.7 823.3 145.8 815 150C806.7 154.2 792.5 167.5 790 180C787.5 192.5 790.8 214.2 800 225C809.2 235.8 830.0 242.2 845 245C860.0 247.8 882.5 242.5 890 242M900 145C907.5 145.5 935.0 141.3 945 148C955.0 154.7 961.7 172.2 960 185C958.3 197.8 946.7 215.0 935 225C923.3 235.0 897.5 241.7 890 245M995 145C996.2 152.5 999.2 175.0 1002 190C1004.8 205.0 1010.3 227.5 1012 235M1058 85C1060.8 98.3 1069.3 137.5 1075 165C1080.7 192.5 1089.2 235.8 1092 250M1015 160C1021.7 159.8 1041.7 159.3 1055 159C1068.3 158.7 1088.3 158.2 1095 158M1115 190C1120.8 189.2 1140.8 190.0 1150 185C1159.2 180.0 1170.0 168.3 1170 160C1170.0 151.7 1159.2 137.5 1150 135C1140.8 132.5 1121.7 135.8 1115 145C1108.3 154.2 1107.5 177.5 1110 190C1112.5 202.5 1120.0 213.3 1130 220C1140.0 226.7 1163.3 228.3 1170 230M1255 235C1249.2 230.0 1224.2 216.7 1220 205C1215.8 193.3 1221.7 175.0 1230 165C1238.3 155.0 1256.7 145.0 1270 145C1283.3 145.0 1297.5 155.0 1310 165C1322.5 175.0 1333.3 195.0 1345 205C1356.7 215.0 1365.0 221.7 1380 225C1395.0 228.3 1425.8 225.0 1435 225M1320 230C1324.2 223.3 1336.7 204.2 1345 190C1353.3 175.8 1365.8 152.5 1370 145M229 490C220.8 485.5 197.2 466.7 180 463C162.8 459.3 139.5 459.8 126 468C112.5 476.2 100.8 497.5 99 512C97.2 526.5 105.2 546.0 115 555C124.8 564.0 143.5 566.8 158 566C172.5 565.2 190.2 558.2 202 550C213.8 541.8 223.7 516.2 229 517C234.3 517.8 233.2 548.7 234 555M250 474C251.0 480.3 254.2 500.3 256 512C257.8 523.7 260.2 538.7 261 544M256 495C263.2 490.5 282.8 472.5 299 468C315.2 463.5 335.8 462.5 353 468C370.2 473.5 393.0 489.2 402 501C411.0 512.8 412.3 528.2 407 539C401.7 549.8 376.2 561.5 370 566M660 470C653.3 475.0 623.3 486.7 620 500C616.7 513.3 623.3 540.0 640 550C656.7 560.0 693.3 570.0 720 560C746.7 550.0 783.3 491.7 800 490C816.7 488.3 816.7 540.0 820 550M850 480C851.7 485.8 856.7 503.3 860 515C863.3 526.7 868.3 544.2 870 550M860 510C870.0 503.3 901.7 473.3 920 470C938.3 466.7 960.8 478.3 970 490C979.2 501.7 974.2 531.7 975 540M1100 470C1091.7 468.3 1063.3 453.3 1050 460C1036.7 466.7 1020.0 493.3 1020 510C1020.0 526.7 1035.0 550.0 1050 560C1065.0 570.0 1100.0 568.3 1110 570M1190 460C1183.3 464.2 1156.7 470.8 1150 485C1143.3 499.2 1141.7 532.5 1150 545C1158.3 557.5 1185.0 564.2 1200 560C1215.0 555.8 1235.0 535.0 1240 520C1245.0 505.0 1238.3 480.0 1230 470C1221.7 460.0 1196.7 461.7 1190 460M1260 390C1264.2 405.0 1276.7 450.0 1285 480C1293.3 510.0 1305.8 555.0 1310 570M1370 470C1364.2 473.3 1340.8 478.3 1335 490C1329.2 501.7 1328.3 529.2 1335 540C1341.7 550.8 1361.7 558.3 1375 555C1388.3 551.7 1410.0 532.5 1415 520C1420.0 507.5 1412.5 488.3 1405 480C1397.5 471.7 1375.8 471.7 1370 470M1430 480C1431.7 485.8 1436.7 503.3 1440 515C1443.3 526.7 1448.3 544.2 1450 550M1440 500C1448.3 493.3 1475.0 466.7 1490 460C1505.0 453.3 1523.3 460.0 1530 460M1530 530C1540.0 528.3 1578.3 526.7 1590 520C1601.7 513.3 1606.7 498.3 1600 490C1593.3 481.7 1561.7 466.7 1550 470C1538.3 473.3 1530.0 495.0 1530 510C1530.0 525.0 1535.0 550.0 1550 560C1565.0 570.0 1608.3 568.3 1620 570" fill="none" stroke="#0a0a0a" stroke-width="46.24" stroke-linecap="round" stroke-linejoin="round"></path></g><g transform="translate(1290 435) scale(0.25)"><path d="M100 450C91.7 453.3 61.7 458.3 50 470C38.3 481.7 25.0 505.0 30 520C35.0 535.0 58.3 558.3 80 560C101.7 561.7 146.7 535.0 160 530M120 395C125.0 415.8 140.8 477.5 150 520C159.2 562.5 170.8 628.3 175 650M142 137C136.3 138.3 117.8 136.5 108 145C98.2 153.5 83.0 173.7 83 188C83.0 202.3 93.8 224.5 108 231C122.2 237.5 146.7 234.2 168 227C189.3 219.8 220.3 197.3 236 188C251.7 178.7 257.7 166.7 262 171C266.3 175.3 256.3 201.8 262 214C267.7 226.2 281.8 239.8 296 244C310.2 248.2 334.8 246.8 347 239C359.2 231.2 367.5 212.7 369 197C370.5 181.3 365.3 157.8 356 145C346.7 132.2 325.8 122.8 313 120C300.2 117.2 284.7 126.7 279 128M441 162C442.2 168.5 445.8 188.2 448 201C450.2 213.8 453.0 232.7 454 239M433 73L435 79M527 107C528.3 119.2 532.2 157.2 535 180C537.8 202.8 542.5 233.3 544 244M500 165C505.0 164.5 519.2 162.8 530 162C540.8 161.2 559.2 160.3 565 160M591 90C592.0 101.3 594.8 136.0 597 158C599.2 180.0 602.8 211.3 604 222M595 162C603.5 158.5 627.5 139.5 646 141C664.5 142.5 693.8 157.5 706 171C718.2 184.5 725.3 208.5 719 222C712.7 235.5 676.5 247.0 668 252M1005 145C996.5 143.7 968.2 131.2 954 137C939.8 142.8 924.3 163.0 920 180C915.7 197.0 918.0 224.8 928 239C938.0 253.2 971.3 260.7 980 265M1056 180C1049.0 182.8 1021.0 187.2 1014 197C1007.0 206.8 1007.0 229.8 1014 239C1021.0 248.2 1043.2 253.3 1056 252C1068.8 250.7 1085.2 241.7 1091 231C1096.8 220.3 1096.8 196.5 1091 188C1085.2 179.5 1061.8 181.3 1056 180M1142 124C1144.8 136.2 1153.3 170.7 1159 197C1164.7 223.3 1173.2 267.8 1176 282M1270 180C1260.0 184.2 1220.0 192.3 1210 205C1200.0 217.7 1201.5 244.5 1210 256C1218.5 267.5 1242.5 275.3 1261 274C1279.5 272.7 1311.0 260.8 1321 248C1331.0 235.2 1329.5 208.3 1321 197C1312.5 185.7 1278.5 182.8 1270 180M1338 180C1342.3 188.5 1355.3 213.3 1364 231C1372.7 248.7 1385.7 276.8 1390 286M1355 214C1362.2 208.3 1382.3 187.2 1398 180C1413.7 172.8 1440.5 172.5 1449 171M1577 133C1581.3 146.5 1594.3 184.8 1603 214C1611.7 243.2 1624.7 292.3 1629 308M332 459C343.3 463.3 372.3 471.8 400 485C427.7 498.2 478.0 543.0 498 538C518.0 533.0 516.3 487.0 520 455C523.7 423.0 520.0 364.2 520 346M595 492C601.2 489.7 624.5 486.7 632 478C639.5 469.3 643.7 450.0 640 440C636.3 430.0 620.0 415.5 610 418C600.0 420.5 583.7 437.7 580 455C576.3 472.3 580.5 506.3 588 522C595.5 537.7 608.8 544.5 625 549C641.2 553.5 675.0 549.0 685 549M704 455C714.7 453.2 747.3 445.2 768 444C788.7 442.8 821.8 440.0 828 448C834.2 456.0 820.0 476.5 805 492C790.0 507.5 749.2 532.8 738 541M858 429C859.2 438.3 862.7 466.8 865 485C867.3 503.2 870.8 529.2 872 538M902 402C904.7 415.8 912.3 459.3 918 485C923.7 510.7 933.0 544.2 936 556M828 478C844.2 477.5 891.3 474.5 925 475C958.7 475.5 1012.5 480.0 1030 481M1000 508C1005.0 506.7 1023.7 505.0 1030 500C1036.3 495.0 1040.5 483.0 1038 478C1035.5 473.0 1022.7 466.3 1015 470C1007.3 473.7 994.5 488.7 992 500C989.5 511.3 993.7 531.2 1000 538C1006.3 544.8 1018.7 541.0 1030 541C1041.3 541.0 1061.7 538.5 1068 538M1150 538C1143.7 531.7 1114.5 513.8 1112 500C1109.5 486.2 1122.3 465.0 1135 455C1147.7 445.0 1171.8 438.8 1188 440C1204.2 441.2 1217.0 449.5 1232 462C1247.0 474.5 1264.2 501.2 1278 515C1291.8 528.8 1302.7 539.3 1315 545C1327.3 550.7 1345.8 548.3 1352 549M1218 538C1223.0 530.3 1239.3 509.0 1248 492C1256.7 475.0 1266.3 445.3 1270 436M1480 455C1483.7 462.5 1494.5 485.0 1502 500C1509.5 515.0 1517.3 550.0 1525 545C1532.7 540.0 1543.0 491.8 1548 470C1553.0 448.2 1553.8 423.3 1555 414M1645 534L1647 536" fill="none" stroke="#0a0a0a" stroke-width="46.24" stroke-linecap="round" stroke-linejoin="round"></path></g><g transform="translate(690 585) scale(0.25)"><path d="M177 164C173.5 159.7 166.3 143.2 156 138C145.7 132.8 129.7 128.7 115 133C100.3 137.3 80.2 148.3 68 164C55.8 179.7 42.8 206.2 42 227C41.2 247.8 50.8 274.3 63 289C75.2 303.7 96.0 310.7 115 315C134.0 319.3 166.7 315.0 177 315M255 206C249.0 207.7 224.2 207.3 219 216C213.8 224.7 217.2 247.5 224 258C230.8 268.5 248.7 277.3 260 279C271.3 280.7 286.7 275.8 292 268C297.3 260.2 295.5 241.5 292 232C288.5 222.5 279.7 214.5 271 211C262.3 207.5 245.2 211.0 240 211M297 138C301.3 151.0 315.2 189.0 323 216C330.8 243.0 340.5 286.0 344 300M422 195C415.0 198.5 387.8 203.8 380 216C372.2 228.2 369.8 253.2 375 268C380.2 282.8 397.2 300.7 411 305C424.8 309.3 448.3 304.5 458 294C467.7 283.5 471.5 256.7 469 242C466.5 227.3 450.8 213.8 443 206C435.2 198.2 425.5 196.8 422 195M479 190C484.2 198.7 499.5 223.7 510 242C520.5 260.3 536.7 290.3 542 300M516 232C520.3 225.8 531.7 202.8 542 195C552.3 187.2 572.0 186.7 578 185M766 198C767.3 204.7 771.5 225.3 774 238C776.5 250.7 779.8 268.0 781 274M752 143L762 162M818 128C822.3 138.3 836.2 163.2 844 190C851.8 216.8 852.8 271.7 865 289C877.2 306.3 908.3 293.2 917 294M828 201C835.8 200.2 858.5 197.0 875 196C891.5 195.0 918.3 195.2 927 195M1149 169C1140.7 169.5 1110.8 163.8 1099 172C1087.2 180.2 1076.8 202.7 1078 218C1079.2 233.3 1091.8 256.8 1106 264C1120.2 271.2 1146.5 268.7 1163 261C1179.5 253.3 1198.5 228.7 1205 218C1211.5 207.3 1201.3 192.2 1202 197C1202.7 201.8 1201.3 234.0 1209 247C1216.7 260.0 1234.5 272.7 1248 275C1261.5 277.3 1279.3 272.8 1290 261C1300.7 249.2 1310.7 224.2 1312 204C1313.3 183.8 1308.7 155.3 1298 140C1287.3 124.7 1259.3 113.7 1248 112C1236.7 110.3 1233.0 127.0 1230 130M1368 183C1369.2 189.5 1372.5 209.0 1375 222C1377.5 235.0 1381.7 254.5 1383 261M1365 116L1366 118M1418 126C1421.5 140.2 1432.5 186.2 1439 211C1445.5 235.8 1454.0 264.3 1457 275M1393 190C1398.3 189.8 1415.0 189.7 1425 189C1435.0 188.3 1448.3 186.5 1453 186M1482 105C1484.3 120.3 1490.7 166.3 1496 197C1501.3 227.7 1511.0 273.7 1514 289M1496 211C1503.0 206.3 1520.3 185.3 1538 183C1555.7 180.7 1585.3 186.3 1602 197C1618.7 207.7 1634.5 232.8 1638 247C1641.5 261.2 1629.0 275.5 1623 282C1617.0 288.5 1605.5 285.3 1602 286M153 429C157.2 442.0 170.3 483.5 178 507C185.7 530.5 195.5 559.5 199 570M171 493C179.2 485.8 201.2 456.5 220 450C238.8 443.5 265.0 444.5 284 454C303.0 463.5 322.2 491.2 334 507C345.8 522.8 343.2 538.5 355 549C366.8 559.5 387.3 568.2 405 570C422.7 571.8 445.7 569.3 461 560C476.3 550.7 489.8 530.0 497 514C504.2 498.0 502.8 472.3 504 464M298 563L341 528M504 464C505.7 471.2 510.5 492.8 514 507C517.5 521.2 523.2 542.0 525 549M553 471C554.8 478.2 560.3 499.8 564 514C567.7 528.2 573.2 549.0 575 556M564 500C572.8 495.2 601.0 472.2 617 471C633.0 469.8 651.2 478.8 660 493C668.8 507.2 668.3 545.5 670 556M667 507C675.2 502.2 701.3 480.3 716 478C730.7 475.7 746.7 481.2 755 493C763.3 504.8 764.2 539.7 766 549M769 386C772.7 401.3 783.8 448.5 791 478C798.2 507.5 808.5 548.8 812 563M808 500C817.5 497.0 850.2 480.8 865 482C879.8 483.2 895.8 495.8 897 507C898.2 518.2 885.7 539.7 872 549C858.3 558.3 824.5 560.7 815 563M915 514C924.3 510.5 960.5 500.2 971 493C981.5 485.8 982.7 476.3 978 471C973.3 465.7 956.0 457.3 943 461C930.0 464.7 909.5 479.5 900 493C890.5 506.5 880.0 529.2 886 542C892.0 554.8 910.0 568.2 936 570C962.0 571.8 1024.3 555.8 1042 553M1049 464C1052.5 471.2 1062.8 492.8 1070 507C1077.2 521.2 1088.3 542.0 1092 549M1063 493C1070.2 487.7 1093.5 467.5 1106 461C1118.5 454.5 1132.7 455.2 1138 454M1113 514C1121.3 511.7 1153.0 506.0 1163 500C1173.0 494.0 1177.8 483.3 1173 478C1168.2 472.7 1145.2 463.2 1134 468C1122.8 472.8 1108.3 493.5 1106 507C1103.7 520.5 1103.5 541.3 1120 549C1136.5 556.7 1190.8 552.3 1205 553M1354 485C1345.7 480.3 1319.3 455.7 1304 457C1288.7 458.3 1267.8 478.8 1262 493C1256.2 507.2 1257.2 531.5 1269 542C1280.8 552.5 1315.3 557.2 1333 556C1350.7 554.8 1368.0 538.5 1375 535M1347 408C1351.7 424.5 1366.8 474.0 1375 507C1383.2 540.0 1392.5 589.5 1396 606" fill="none" stroke="#0a0a0a" stroke-width="46.24" stroke-linecap="round" stroke-linejoin="round"></path></g><g transform="translate(1110 585) scale(0.25)"><path d="M156 91C159.5 102.8 168.8 136.0 177 162C185.2 188.0 200.3 232.8 205 247M113 155C127.2 153.8 169.7 150.5 198 148C226.3 145.5 268.8 141.3 283 140M234 70C237.5 85.3 248.0 133.7 255 162C262.0 190.3 272.5 227.0 276 240M269 197C276.2 191.2 296.7 169.0 312 162C327.3 155.0 352.8 156.2 361 155M390 236C400.5 230.2 431.8 210.5 453 201C474.2 191.5 509.3 188.8 517 179C524.7 169.2 510.8 147.8 499 142C487.2 136.2 462.5 137.2 446 144C429.5 150.8 402.3 168.2 400 183C397.7 197.8 412.5 222.3 432 233C451.5 243.7 491.0 245.8 517 247C543.0 248.2 576.2 241.2 588 240M785 42C786.0 57.0 788.2 98.2 791 132C793.8 165.8 791.8 228.0 802 245C812.2 262.0 833.3 235.3 852 234C870.7 232.7 903.7 236.5 914 237M1010 149C1000.7 151.8 966.2 155.7 954 166C941.8 176.3 935.2 196.8 937 211C938.8 225.2 952.8 243.5 965 251C977.2 258.5 996.8 260.8 1010 256C1023.2 251.2 1039.3 236.0 1044 222C1048.7 208.0 1043.7 184.2 1038 172C1032.3 159.8 1014.7 152.8 1010 149M971 180L972 182M1100 138C1095.3 141.8 1077.7 149.7 1072 161C1066.3 172.3 1061.3 194.8 1066 206C1070.7 217.2 1088.7 225.3 1100 228C1111.3 230.7 1128.3 223.0 1134 222M1184 172C1185.0 178.5 1182.5 201.7 1190 211C1197.5 220.3 1215.0 228.0 1229 228C1243.0 228.0 1263.7 224.2 1274 211C1284.3 197.8 1291.0 167.7 1291 149C1291.0 130.3 1281.5 108.3 1274 99C1266.5 89.7 1250.7 94.0 1246 93M1359 172C1368.3 170.2 1402.8 167.7 1415 161C1427.2 154.3 1435.8 139.5 1432 132C1428.2 124.5 1405.2 113.2 1392 116C1378.8 118.8 1358.5 135.0 1353 149C1347.5 163.0 1350.5 188.7 1359 200C1367.5 211.3 1392.8 214.2 1404 217C1415.2 219.8 1422.3 217.0 1426 217M1561 132C1553.5 130.2 1529.2 118.2 1516 121C1502.8 123.8 1480.0 140.5 1482 149C1484.0 157.5 1512.0 165.3 1528 172C1544.0 178.7 1571.5 181.5 1578 189C1584.5 196.5 1584.8 210.5 1567 217C1549.2 223.5 1487.0 226.2 1471 228M1618 48C1623.5 49.0 1644.5 40.0 1651 54C1657.5 68.0 1655.2 101.2 1657 132C1658.8 162.8 1651.7 223.0 1662 239C1672.3 255.0 1709.5 229.8 1719 228M1629 138C1638.3 137.0 1666.3 133.3 1685 132C1703.7 130.7 1731.7 130.3 1741 130M48 435C41.0 430.7 20.2 408.0 6 409C-8.2 410.0 -28.2 425.2 -37 441C-45.8 456.8 -50.7 486.5 -47 504C-43.3 521.5 -32.5 539.0 -15 546C2.5 553.0 45.8 546.0 58 546M122 472C115.8 475.5 90.3 482.3 85 493C79.7 503.7 82.2 527.2 90 536C97.8 544.8 118.8 547.8 132 546C145.2 544.2 162.8 535.5 169 525C175.2 514.5 176.8 491.8 169 483C161.2 474.2 129.8 473.8 122 472M243 398C245.7 410.3 252.8 447.3 259 472C265.2 496.7 276.5 533.7 280 546M386 462C377.2 465.5 341.8 470.7 333 483C324.2 495.3 324.2 524.5 333 536C341.8 547.5 368.5 553.8 386 552C403.5 550.2 430.2 537.3 438 525C445.8 512.7 441.7 488.5 433 478C424.3 467.5 393.8 464.7 386 462M475 457C481.2 464.8 500.5 489.2 512 504C523.5 518.8 538.7 539.0 544 546M491 483C498.2 478.7 518.2 462.3 534 457C549.8 451.7 577.3 452.0 586 451M871 399C875.7 412.2 889.2 450.0 899 478C908.8 506.0 924.8 552.2 930 567M819 470C829.0 470.3 859.2 471.7 879 472C898.8 472.3 928.2 472.0 938 472M954 377L974 395M954 377C954.7 387.3 955.3 410.8 958 439C960.7 467.2 968.0 528.2 970 546M966 486C971.3 481.5 986.2 464.2 998 459C1009.8 453.8 1022.5 451.8 1037 455C1051.5 458.2 1074.5 468.8 1085 478C1095.5 487.2 1100.0 498.7 1100 510C1100.0 521.3 1092.2 536.8 1085 546C1077.8 555.2 1066.3 560.5 1057 565C1047.7 569.5 1033.7 571.7 1029 573M1203 494C1201.7 486.8 1202.8 460.8 1195 451C1187.2 441.2 1169.2 434.3 1156 435C1142.8 435.7 1124.7 444.5 1116 455C1107.3 465.5 1102.7 483.5 1104 498C1105.3 512.5 1114.0 533.3 1124 542C1134.0 550.7 1148.8 550.7 1164 550C1179.2 549.3 1202.5 546.7 1215 538C1227.5 529.3 1234.3 509.3 1239 498C1243.7 486.7 1242.3 474.7 1243 470M1241 478C1242.7 484.7 1245.3 507.3 1251 518C1256.7 528.7 1264.5 536.7 1275 542C1285.5 547.3 1307.5 548.7 1314 550M1346 399C1350.7 412.2 1365.5 449.7 1374 478C1382.5 506.3 1393.2 553.8 1397 569M1318 463C1328.0 462.0 1357.5 457.7 1378 457C1398.5 456.3 1430.5 458.7 1441 459" fill="none" stroke="#0a0a0a" stroke-width="46.24" stroke-linecap="round" stroke-linejoin="round"></path></g><g transform="translate(1280 650) scale(0.25)"><path d="M947 58C951.0 74.0 963.8 124.3 971 154C978.2 183.7 986.8 222.3 990 236M985 173C989.8 167.5 1002.0 147.2 1014 140C1026.0 132.8 1041.8 127.7 1057 130C1072.2 132.3 1094.5 143.7 1105 154C1115.5 164.3 1120.8 180.8 1120 192C1119.2 203.2 1107.3 214.5 1100 221C1092.7 227.5 1080.0 229.3 1076 231M1263 154C1256.7 148.5 1239.3 124.2 1225 121C1210.7 117.8 1189.0 125.5 1177 135C1165.0 144.5 1153.8 164.5 1153 178C1152.2 191.5 1161.7 208.0 1172 216C1182.3 224.0 1201.3 227.5 1215 226C1228.7 224.5 1246.0 217.3 1254 207C1262.0 196.7 1260.7 164.0 1263 164C1265.3 164.0 1264.0 196.7 1268 207C1272.0 217.3 1283.8 222.8 1287 226M1441 121C1436.2 118.5 1424.8 105.3 1412 106C1399.2 106.7 1376.8 115.3 1364 125C1351.2 134.7 1331.8 157.5 1335 164C1338.2 170.5 1363.0 161.7 1383 164C1403.0 166.3 1435.0 170.8 1455 178C1475.0 185.2 1495.8 198.2 1503 207C1510.2 215.8 1510.0 225.5 1498 231C1486.0 236.5 1450.2 239.2 1431 240C1411.8 240.8 1391.0 236.7 1383 236" fill="none" stroke="#0a0a0a" stroke-width="46.24" stroke-linecap="round" stroke-linejoin="round"></path></g><g transform="translate(1440 740) scale(0.16666666666666666)"><path d="M720 100C706.7 91.7 670.0 53.3 640 50C610.0 46.7 565.0 60.0 540 80C515.0 100.0 491.7 143.3 490 170C488.3 196.7 508.3 228.3 530 240C551.7 251.7 591.7 251.7 620 240C648.3 228.3 683.3 195.0 700 170C716.7 145.0 715.0 86.7 720 90C725.0 93.3 721.7 166.7 730 190C738.3 213.3 763.3 223.3 770 230M820 80C822.5 90.8 830.0 123.3 835 145C840.0 166.7 847.5 199.2 850 210M830 130C841.7 123.3 875.0 93.3 900 90C925.0 86.7 960.0 96.7 980 110C1000.0 123.3 1020.0 151.7 1020 170C1020.0 188.3 986.7 211.7 980 220M1130 90C1125.0 98.3 1098.3 123.3 1100 140C1101.7 156.7 1118.3 180.0 1140 190C1161.7 200.0 1208.3 208.3 1230 200C1251.7 191.7 1263.3 160.0 1270 140C1276.7 120.0 1270.0 90.0 1270 80M1270 80C1273.3 116.7 1281.7 243.3 1290 300C1298.3 356.7 1313.3 380.0 1320 420C1326.7 460.0 1343.3 531.7 1330 540C1316.7 548.3 1260.0 493.3 1240 470C1220.0 446.7 1206.7 423.3 1210 400C1213.3 376.7 1228.3 355.0 1260 330C1291.7 305.0 1335.0 284.2 1400 250C1465.0 215.8 1608.3 145.8 1650 125M105 580C122.5 595.0 174.2 638.3 210 670C245.8 701.7 298.3 775.0 320 770C341.7 765.0 335.0 685.0 340 640C345.0 595.0 348.3 523.3 350 500M450 640C461.7 636.7 506.7 630.0 520 620C533.3 610.0 536.7 588.3 530 580C523.3 571.7 495.0 560.0 480 570C465.0 580.0 440.0 611.7 440 640C440.0 668.3 456.7 720.0 480 740C503.3 760.0 563.3 756.7 580 760M600 650C610.0 646.7 648.3 638.3 660 630C671.7 621.7 676.7 606.7 670 600C663.3 593.3 633.3 581.7 620 590C606.7 598.3 590.0 626.7 590 650C590.0 673.3 598.3 711.7 620 730C641.7 748.3 703.3 755.0 720 760M790 520C792.5 536.7 800.0 586.7 805 620C810.0 653.3 827.5 696.7 820 720C812.5 743.3 770.0 753.3 760 760M700 652C715.0 651.7 760.0 650.7 790 650C820.0 649.3 865.0 648.3 880 648M960 470L975 530M1080 580C1071.7 581.7 1043.3 578.3 1030 590C1016.7 601.7 1003.3 628.3 1000 650C996.7 671.7 1008.3 708.3 1010 720M1180 680C1190.0 676.7 1228.3 670.0 1240 660C1251.7 650.0 1255.0 628.3 1250 620C1245.0 611.7 1221.7 600.0 1210 610C1198.3 620.0 1178.3 655.0 1180 680C1181.7 705.0 1193.3 745.0 1220 760C1246.7 775.0 1320.0 768.3 1340 770M1620 600C1596.7 598.3 1516.7 583.3 1480 590C1443.3 596.7 1400.0 621.7 1400 640C1400.0 658.3 1436.7 686.7 1480 700C1523.3 713.3 1628.3 710.0 1660 720C1691.7 730.0 1686.7 748.3 1670 760C1653.3 771.7 1608.3 788.3 1560 790C1511.7 791.7 1410.0 773.3 1380 770" fill="none" stroke="#0a0a0a" stroke-width="69.36" stroke-linecap="round" stroke-linejoin="round"></path></g><g transform="translate(710 735) scale(0.25)"><path d="M130 156C132.0 162.3 137.5 182.5 142 194C146.5 205.5 154.5 219.8 157 225M149 186C159.3 178.3 190.3 149.5 211 140C231.7 130.5 253.7 126.3 273 129C292.3 131.7 316.8 146.5 327 156C337.2 165.5 337.8 175.8 334 186C330.2 196.2 309.0 211.8 304 217M411 156C404.7 159.2 379.3 166.7 373 175C366.7 183.3 366.7 198.3 373 206C379.3 213.7 396.8 221.0 411 221C425.2 221.0 447.7 213.0 458 206C468.3 199.0 475.7 186.8 473 179C470.3 171.2 452.3 162.8 442 159C431.7 155.2 416.2 156.5 411 156M535 117C540.2 127.3 555.2 158.5 566 179C576.8 199.5 594.3 229.8 600 240M527 190C536.0 189.3 561.7 186.0 581 186C600.3 186.0 632.7 189.3 643 190M940 75C943.2 88.5 953.3 131.7 959 156C964.7 180.3 971.5 210.2 974 221M982 156C991.0 154.0 1020.7 142.8 1036 144C1051.3 145.2 1070.2 152.7 1074 163C1077.8 173.3 1068.0 194.3 1059 206C1050.0 217.7 1031.5 227.8 1020 233C1008.5 238.2 995.0 236.3 990 237M1074 198C1081.8 195.5 1110.7 190.0 1121 183C1131.3 176.0 1138.7 163.2 1136 156C1133.3 148.8 1115.3 137.5 1105 140C1094.7 142.5 1079.2 157.5 1074 171C1068.8 184.5 1067.5 210.0 1074 221C1080.5 232.0 1098.8 235.0 1113 237C1127.2 239.0 1151.3 233.7 1159 233M1213 194C1220.7 192.2 1248.7 190.0 1259 183C1269.3 176.0 1277.5 159.8 1275 152C1272.5 144.2 1254.3 133.5 1244 136C1233.7 138.5 1217.5 152.8 1213 167C1208.5 181.2 1210.5 209.0 1217 221C1223.5 233.0 1238.5 236.3 1252 239C1265.5 241.7 1290.3 237.3 1298 237M1352 140C1353.3 145.2 1357.7 160.7 1360 171C1362.3 181.3 1365.0 196.8 1366 202M1356 163C1364.3 157.3 1387.3 133.5 1406 129C1424.7 124.5 1452.7 128.3 1468 136C1483.3 143.7 1495.5 162.7 1498 175C1500.5 187.3 1492.0 201.0 1483 210C1474.0 219.0 1450.5 225.8 1444 229M75 471C69.5 463.3 43.3 442.3 42 425C40.7 407.7 51.8 379.5 67 367C82.2 354.5 112.2 349.3 133 350C153.8 350.7 183.7 358.5 192 371C200.3 383.5 198.3 411.2 183 425C167.7 438.8 113.8 449.2 100 454M96 346C99.5 366.2 111.5 429.5 117 467C122.5 504.5 127.0 553.7 129 571M325 479C316.7 477.7 287.5 467.5 275 471C262.5 474.5 250.0 490.3 250 500C250.0 509.7 261.2 526.2 275 529C288.8 531.8 320.5 524.7 333 517C345.5 509.3 347.2 488.7 350 483M267 550C275.3 547.2 300.3 539.3 317 533C333.7 526.7 358.7 515.5 367 512M358 517C367.8 515.5 403.0 513.7 417 508C431.0 502.3 444.8 489.8 442 483C439.2 476.2 414.0 464.2 400 467C386.0 469.8 360.8 486.2 358 500C355.2 513.8 359.3 540.3 383 550C406.7 559.7 480.5 556.7 500 558M550 479C555.5 485.3 571.2 503.8 583 517C594.8 530.2 612.7 559.5 621 558C629.3 556.5 628.2 524.7 633 508C637.8 491.3 647.2 466.3 650 458M700 475C701.7 480.5 706.5 496.8 710 508C713.5 519.2 719.2 536.3 721 542M688 379L717 404M800 450C793.0 454.2 765.0 462.5 758 475C751.0 487.5 749.7 513.8 758 525C766.3 536.2 791.3 542.0 808 542C824.7 542.0 846.8 534.8 858 525C869.2 515.2 877.7 494.8 875 483C872.3 471.2 854.5 459.5 842 454C829.5 448.5 807.0 450.7 800 450M975 467C966.7 469.0 936.2 470.7 925 479C913.8 487.3 903.8 505.2 908 517C912.2 528.8 931.8 545.8 950 550C968.2 554.2 1000.3 551.7 1017 542C1033.7 532.3 1043.2 503.2 1050 492C1056.8 480.8 1058.0 470.8 1058 475C1058.0 479.2 1047.2 504.5 1050 517C1052.8 529.5 1070.8 544.5 1075 550M1150 475C1140.3 475.0 1103.2 470.8 1092 475C1080.8 479.2 1073.3 491.7 1083 500C1092.7 508.3 1137.5 516.7 1150 525C1162.5 533.3 1170.5 544.5 1158 550C1145.5 555.5 1088.8 556.7 1075 558M1192 367C1201.7 383.7 1233.3 436.5 1250 467C1266.7 497.5 1285.0 536.2 1292 550M1342 442C1335.0 448.8 1302.8 469.2 1300 483C1297.2 496.8 1311.2 518.0 1325 525C1338.8 532.0 1367.7 533.3 1383 525C1398.3 516.7 1412.8 491.7 1417 475C1421.2 458.3 1409.5 433.3 1408 425M1408 425C1412.2 445.8 1423.2 512.5 1433 550C1442.8 587.5 1454.5 619.5 1467 650C1479.5 680.5 1516.3 726.0 1508 733C1499.7 740.0 1440.5 707.2 1417 692C1393.5 676.8 1372.7 656.0 1367 642C1361.3 628.0 1367.8 620.5 1383 608C1398.2 595.5 1428.8 583.7 1458 567C1487.2 550.3 1541.3 517.8 1558 508" fill="none" stroke="#0a0a0a" stroke-width="46.24" stroke-linecap="round" stroke-linejoin="round"></path></g><g transform="translate(1120 735) scale(0.25)"><path d="M120 148C113.7 149.2 90.7 147.7 82 155C73.3 162.3 64.2 178.2 68 192C71.8 205.8 87.7 230.3 105 238C122.3 245.7 149.5 244.3 172 238C194.5 231.7 225.0 215.0 240 200C255.0 185.0 257.0 148.0 262 148C267.0 148.0 263.7 188.8 270 200C276.3 211.2 295.0 212.5 300 215M412 132C403.3 133.3 370.0 135.0 360 140C350.0 145.0 343.3 154.5 352 162C360.7 169.5 397.0 177.3 412 185C427.0 192.7 439.3 199.2 442 208C444.7 216.8 439.2 233.0 428 238C416.8 243.0 383.8 238.0 375 238M465 192C475.0 190.8 512.5 191.2 525 185C537.5 178.8 542.5 163.8 540 155C537.5 146.2 522.5 130.8 510 132C497.5 133.2 470.0 148.2 465 162C460.0 175.8 467.5 202.3 480 215C492.5 227.7 516.3 236.2 540 238C563.7 239.8 608.3 228.0 622 226M765 155C752.5 151.2 712.5 132.0 690 132C667.5 132.0 642.5 143.7 630 155C617.5 166.3 608.7 188.8 615 200C621.3 211.2 650.5 220.7 668 222C685.5 223.3 707.7 216.7 720 208C732.3 199.3 738.3 176.3 742 170M690 54C698.7 73.3 726.3 132.0 742 170C757.7 208.0 777.0 263.3 784 282M1042 102C1034.7 107.0 1005.3 117.0 998 132C990.7 147.0 989.3 175.7 998 192C1006.7 208.3 1033.8 228.7 1050 230C1066.2 231.3 1087.5 215.0 1095 200C1102.5 185.0 1103.8 156.3 1095 140C1086.2 123.7 1050.8 108.3 1042 102M1155 110C1158.2 118.2 1168.3 143.3 1174 159C1179.7 174.7 1186.5 196.5 1189 204M1170 148C1180.0 143.0 1207.5 120.7 1230 118C1252.5 115.3 1287.5 123.3 1305 132C1322.5 140.7 1338.8 158.7 1335 170C1331.2 181.3 1290.8 195.0 1282 200M285 432C275.0 429.7 243.8 414.2 225 418C206.2 421.8 182.0 436.3 172 455C162.0 473.7 158.7 510.0 165 530C171.3 550.0 191.2 567.5 210 575C228.8 582.5 258.0 578.8 278 575C298.0 571.2 321.3 555.8 330 552M398 478C389.2 483.0 353.8 494.3 345 508C336.2 521.7 337.5 546.3 345 560C352.5 573.7 373.8 588.7 390 590C406.2 591.3 430.7 579.3 442 568C453.3 556.7 460.3 535.8 458 522C455.7 508.2 438.0 492.3 428 485C418.0 477.7 403.0 479.2 398 478M488 380C494.2 397.5 513.2 452.5 525 485C536.8 517.5 553.3 560.0 559 575M645 478C637.5 481.7 608.8 488.8 600 500C591.2 511.2 587.0 532.5 592 545C597.0 557.5 616.2 572.5 630 575C643.8 577.5 665.0 570.0 675 560C685.0 550.0 691.2 527.5 690 515C688.8 502.5 675.5 491.2 668 485C660.5 478.8 648.8 479.2 645 478M720 462C725.0 469.7 741.3 493.0 750 508C758.7 523.0 768.3 544.7 772 552M742 478C748.3 473.5 767.3 456.0 780 451C792.7 446.0 811.7 448.5 818 448M862 500C870.8 497.5 905.0 491.3 915 485C925.0 478.7 925.8 468.2 922 462C918.2 455.8 903.2 445.3 892 448C880.8 450.7 860.0 464.3 855 478C850.0 491.7 853.2 518.8 862 530C870.8 541.2 889.2 543.7 908 545C926.8 546.3 963.8 539.2 975 538M1058 462C1048.0 463.3 1013.0 462.3 998 470C983.0 477.7 968.0 496.7 968 508C968.0 519.3 981.8 536.8 998 538C1014.2 539.2 1053.8 518.8 1065 515M1080 380C1083.7 397.5 1095.7 447.5 1102 485C1108.3 522.5 1115.3 585.0 1118 605" fill="none" stroke="#0a0a0a" stroke-width="46.24" stroke-linecap="round" stroke-linejoin="round"></path></g></g></svg>
<svg class="a" style="left:1440px;top:840px" width="320" height="240" viewBox="0 0 1440 1080">
<defs>
<filter id="bl" x="-20%" y="-20%" width="140%" height="140%"><feGaussianBlur stdDeviation="10"></feGaussianBlur></filter>
<filter id="bl2" x="-30%" y="-30%" width="160%" height="160%"><feGaussianBlur stdDeviation="11"></feGaussianBlur></filter>
<radialGradient id="face" cx="0.38" cy="0.36" r="0.8"><stop offset="0" stop-color="#e2b6a4"></stop><stop offset="0.45" stop-color="#bb8d7b"></stop><stop offset="0.8" stop-color="#8a6150"></stop><stop offset="1" stop-color="#634236"></stop></radialGradient>
<radialGradient id="hair" cx="0.5" cy="0.25" r="0.7"><stop offset="0" stop-color="#5a5e5a"></stop><stop offset="1" stop-color="#2a2c2b"></stop></radialGradient>
<linearGradient id="neck" x1="0" y1="0" x2="1" y2="0"><stop offset="0" stop-color="#a07866"></stop><stop offset="1" stop-color="#573a30"></stop></linearGradient>
</defs>
<g filter="url(#bl)">
<path d="M90,1080 L85,930 Q110,820 250,770 L470,690 Q680,780 940,690 L1120,760 Q1290,830 1310,960 L1320,1080 Z" fill="#1a1f2b"></path>
<path d="M560,600 Q575,700 625,820 L700,945 L785,830 Q865,700 885,600 Z" fill="url(#neck)"></path>
<ellipse cx="732" cy="330" rx="228" ry="245" fill="url(#hair)"></ellipse>
<ellipse cx="505" cy="440" rx="28" ry="70" fill="#2e2624"></ellipse>
<ellipse cx="955" cy="450" rx="28" ry="75" fill="#262220"></ellipse>
<ellipse cx="722" cy="450" rx="212" ry="285" fill="url(#face)"></ellipse>
</g>
<g filter="url(#bl2)">
<ellipse cx="592" cy="372" rx="45" ry="20" fill="#2e1c18" opacity=".85"></ellipse>
<ellipse cx="795" cy="377" rx="45" ry="20" fill="#2e1c18" opacity=".85"></ellipse>
<path d="M540,320 Q590,300 650,310" stroke="#5a3c30" stroke-width="14" fill="none" opacity=".6"></path>
<path d="M738,310 Q800,298 855,322" stroke="#5a3c30" stroke-width="14" fill="none" opacity=".6"></path>
<path d="M715,400 Q730,470 720,510" stroke="#7a5244" stroke-width="30" fill="none" opacity=".35"></path>
<ellipse cx="690" cy="608" rx="88" ry="48" fill="#7a4a46"></ellipse>
<ellipse cx="690" cy="600" rx="58" ry="20" fill="#e6d3cf"></ellipse>
<path d="M455,705 Q470,880 535,965 L645,975 L655,1080" stroke="#b0b0b0" stroke-width="14" fill="none"></path>
<path d="M935,705 Q925,870 860,960 L690,965" stroke="#b0b0b0" stroke-width="14" fill="none"></path>
</g>
</svg>
</body></html>
